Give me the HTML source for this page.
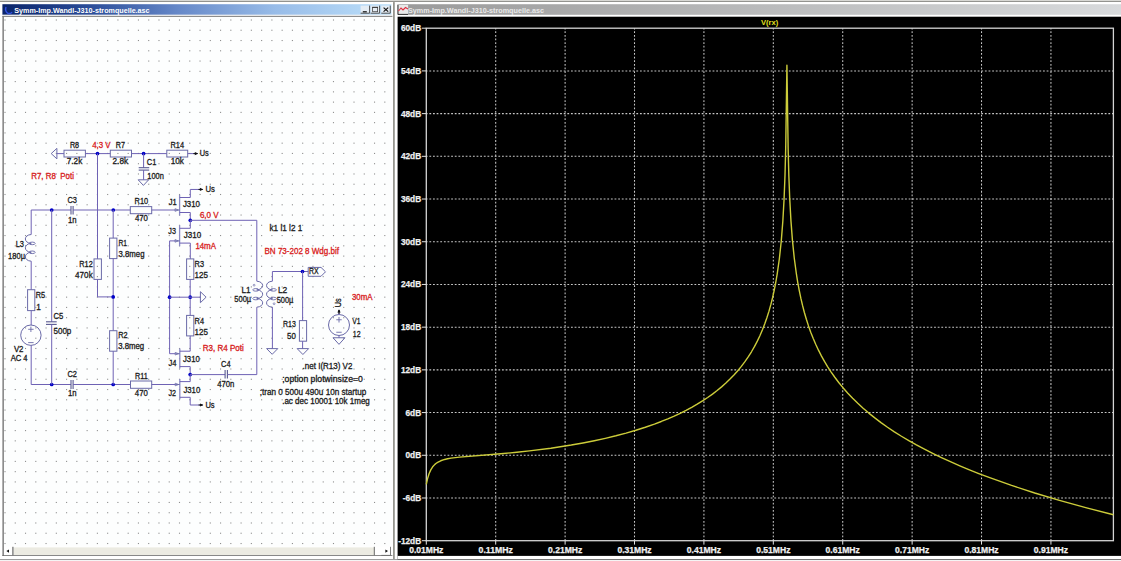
<!DOCTYPE html>
<html><head><meta charset="utf-8"><style>
html,body{margin:0;padding:0;width:1121px;height:561px;overflow:hidden;background:#ffffff;}
svg{position:absolute;left:0;top:0;display:block}
</style></head><body>
<svg width="1121" height="561" viewBox="0 0 1121 561">
<defs>
<linearGradient id="tb1" x1="0" x2="1" y1="0" y2="0"><stop offset="0" stop-color="#0a246a"/><stop offset="0.22" stop-color="#2a4c98"/><stop offset="0.45" stop-color="#6688c8"/><stop offset="0.7" stop-color="#98bce8"/><stop offset="1" stop-color="#bce0fa"/></linearGradient>
<linearGradient id="tb2" x1="0" x2="1" y1="0" y2="0"><stop offset="0" stop-color="#9a9a9a"/><stop offset="1" stop-color="#d8dadc"/></linearGradient>
</defs>

<rect x="0" y="0" width="1121" height="1.2" fill="#d8d8d4"/>
<rect x="0" y="1.2" width="1121" height="0.9" fill="#7a7a76"/>
<rect x="0" y="2.1" width="1121" height="558" fill="#ffffff"/>
<rect x="2.4" y="4.2" width="389" height="10.6" fill="url(#tb1)"/>
<rect x="2.4" y="14.8" width="390" height="1.2" fill="#e8e8e8"/>
<rect x="2.4" y="16.0" width="390" height="0.9" fill="#808080"/>
<rect x="2.4" y="16" width="1.5" height="540" fill="#808080"/>
<rect x="4" y="17" width="388.6" height="529.5" fill="#fdfefe"/>
<g fill="#8e8e8e">
<rect x="4.45" y="19.45" width="1.1" height="1.1"/>
<rect x="4.45" y="29.71" width="1.1" height="1.1"/>
<rect x="4.45" y="39.98" width="1.1" height="1.1"/>
<rect x="4.45" y="50.25" width="1.1" height="1.1"/>
<rect x="4.45" y="60.51" width="1.1" height="1.1"/>
<rect x="4.45" y="70.78" width="1.1" height="1.1"/>
<rect x="4.45" y="81.04" width="1.1" height="1.1"/>
<rect x="4.45" y="91.31" width="1.1" height="1.1"/>
<rect x="4.45" y="101.57" width="1.1" height="1.1"/>
<rect x="4.45" y="111.84" width="1.1" height="1.1"/>
<rect x="4.45" y="122.10" width="1.1" height="1.1"/>
<rect x="4.45" y="132.37" width="1.1" height="1.1"/>
<rect x="4.45" y="142.63" width="1.1" height="1.1"/>
<rect x="4.45" y="152.89" width="1.1" height="1.1"/>
<rect x="4.45" y="163.16" width="1.1" height="1.1"/>
<rect x="4.45" y="173.43" width="1.1" height="1.1"/>
<rect x="4.45" y="183.69" width="1.1" height="1.1"/>
<rect x="4.45" y="193.95" width="1.1" height="1.1"/>
<rect x="4.45" y="204.22" width="1.1" height="1.1"/>
<rect x="4.45" y="214.49" width="1.1" height="1.1"/>
<rect x="4.45" y="224.75" width="1.1" height="1.1"/>
<rect x="4.45" y="235.01" width="1.1" height="1.1"/>
<rect x="4.45" y="245.28" width="1.1" height="1.1"/>
<rect x="4.45" y="255.55" width="1.1" height="1.1"/>
<rect x="4.45" y="265.81" width="1.1" height="1.1"/>
<rect x="4.45" y="276.07" width="1.1" height="1.1"/>
<rect x="4.45" y="286.34" width="1.1" height="1.1"/>
<rect x="4.45" y="296.61" width="1.1" height="1.1"/>
<rect x="4.45" y="306.87" width="1.1" height="1.1"/>
<rect x="4.45" y="317.13" width="1.1" height="1.1"/>
<rect x="4.45" y="327.40" width="1.1" height="1.1"/>
<rect x="4.45" y="337.67" width="1.1" height="1.1"/>
<rect x="4.45" y="347.93" width="1.1" height="1.1"/>
<rect x="4.45" y="358.19" width="1.1" height="1.1"/>
<rect x="4.45" y="368.46" width="1.1" height="1.1"/>
<rect x="4.45" y="378.73" width="1.1" height="1.1"/>
<rect x="4.45" y="388.99" width="1.1" height="1.1"/>
<rect x="4.45" y="399.25" width="1.1" height="1.1"/>
<rect x="4.45" y="409.52" width="1.1" height="1.1"/>
<rect x="4.45" y="419.79" width="1.1" height="1.1"/>
<rect x="4.45" y="430.05" width="1.1" height="1.1"/>
<rect x="4.45" y="440.31" width="1.1" height="1.1"/>
<rect x="4.45" y="450.58" width="1.1" height="1.1"/>
<rect x="4.45" y="460.85" width="1.1" height="1.1"/>
<rect x="4.45" y="471.11" width="1.1" height="1.1"/>
<rect x="4.45" y="481.38" width="1.1" height="1.1"/>
<rect x="4.45" y="491.64" width="1.1" height="1.1"/>
<rect x="4.45" y="501.91" width="1.1" height="1.1"/>
<rect x="4.45" y="512.17" width="1.1" height="1.1"/>
<rect x="4.45" y="522.44" width="1.1" height="1.1"/>
<rect x="4.45" y="532.70" width="1.1" height="1.1"/>
<rect x="4.45" y="542.97" width="1.1" height="1.1"/>
<rect x="14.71" y="19.45" width="1.1" height="1.1"/>
<rect x="14.71" y="29.71" width="1.1" height="1.1"/>
<rect x="14.71" y="39.98" width="1.1" height="1.1"/>
<rect x="14.71" y="50.25" width="1.1" height="1.1"/>
<rect x="14.71" y="60.51" width="1.1" height="1.1"/>
<rect x="14.71" y="70.78" width="1.1" height="1.1"/>
<rect x="14.71" y="81.04" width="1.1" height="1.1"/>
<rect x="14.71" y="91.31" width="1.1" height="1.1"/>
<rect x="14.71" y="101.57" width="1.1" height="1.1"/>
<rect x="14.71" y="111.84" width="1.1" height="1.1"/>
<rect x="14.71" y="122.10" width="1.1" height="1.1"/>
<rect x="14.71" y="132.37" width="1.1" height="1.1"/>
<rect x="14.71" y="142.63" width="1.1" height="1.1"/>
<rect x="14.71" y="152.89" width="1.1" height="1.1"/>
<rect x="14.71" y="163.16" width="1.1" height="1.1"/>
<rect x="14.71" y="173.43" width="1.1" height="1.1"/>
<rect x="14.71" y="183.69" width="1.1" height="1.1"/>
<rect x="14.71" y="193.95" width="1.1" height="1.1"/>
<rect x="14.71" y="204.22" width="1.1" height="1.1"/>
<rect x="14.71" y="214.49" width="1.1" height="1.1"/>
<rect x="14.71" y="224.75" width="1.1" height="1.1"/>
<rect x="14.71" y="235.01" width="1.1" height="1.1"/>
<rect x="14.71" y="245.28" width="1.1" height="1.1"/>
<rect x="14.71" y="255.55" width="1.1" height="1.1"/>
<rect x="14.71" y="265.81" width="1.1" height="1.1"/>
<rect x="14.71" y="276.07" width="1.1" height="1.1"/>
<rect x="14.71" y="286.34" width="1.1" height="1.1"/>
<rect x="14.71" y="296.61" width="1.1" height="1.1"/>
<rect x="14.71" y="306.87" width="1.1" height="1.1"/>
<rect x="14.71" y="317.13" width="1.1" height="1.1"/>
<rect x="14.71" y="327.40" width="1.1" height="1.1"/>
<rect x="14.71" y="337.67" width="1.1" height="1.1"/>
<rect x="14.71" y="347.93" width="1.1" height="1.1"/>
<rect x="14.71" y="358.19" width="1.1" height="1.1"/>
<rect x="14.71" y="368.46" width="1.1" height="1.1"/>
<rect x="14.71" y="378.73" width="1.1" height="1.1"/>
<rect x="14.71" y="388.99" width="1.1" height="1.1"/>
<rect x="14.71" y="399.25" width="1.1" height="1.1"/>
<rect x="14.71" y="409.52" width="1.1" height="1.1"/>
<rect x="14.71" y="419.79" width="1.1" height="1.1"/>
<rect x="14.71" y="430.05" width="1.1" height="1.1"/>
<rect x="14.71" y="440.31" width="1.1" height="1.1"/>
<rect x="14.71" y="450.58" width="1.1" height="1.1"/>
<rect x="14.71" y="460.85" width="1.1" height="1.1"/>
<rect x="14.71" y="471.11" width="1.1" height="1.1"/>
<rect x="14.71" y="481.38" width="1.1" height="1.1"/>
<rect x="14.71" y="491.64" width="1.1" height="1.1"/>
<rect x="14.71" y="501.91" width="1.1" height="1.1"/>
<rect x="14.71" y="512.17" width="1.1" height="1.1"/>
<rect x="14.71" y="522.44" width="1.1" height="1.1"/>
<rect x="14.71" y="532.70" width="1.1" height="1.1"/>
<rect x="14.71" y="542.97" width="1.1" height="1.1"/>
<rect x="24.98" y="19.45" width="1.1" height="1.1"/>
<rect x="24.98" y="29.71" width="1.1" height="1.1"/>
<rect x="24.98" y="39.98" width="1.1" height="1.1"/>
<rect x="24.98" y="50.25" width="1.1" height="1.1"/>
<rect x="24.98" y="60.51" width="1.1" height="1.1"/>
<rect x="24.98" y="70.78" width="1.1" height="1.1"/>
<rect x="24.98" y="81.04" width="1.1" height="1.1"/>
<rect x="24.98" y="91.31" width="1.1" height="1.1"/>
<rect x="24.98" y="101.57" width="1.1" height="1.1"/>
<rect x="24.98" y="111.84" width="1.1" height="1.1"/>
<rect x="24.98" y="122.10" width="1.1" height="1.1"/>
<rect x="24.98" y="132.37" width="1.1" height="1.1"/>
<rect x="24.98" y="142.63" width="1.1" height="1.1"/>
<rect x="24.98" y="152.89" width="1.1" height="1.1"/>
<rect x="24.98" y="163.16" width="1.1" height="1.1"/>
<rect x="24.98" y="173.43" width="1.1" height="1.1"/>
<rect x="24.98" y="183.69" width="1.1" height="1.1"/>
<rect x="24.98" y="193.95" width="1.1" height="1.1"/>
<rect x="24.98" y="204.22" width="1.1" height="1.1"/>
<rect x="24.98" y="214.49" width="1.1" height="1.1"/>
<rect x="24.98" y="224.75" width="1.1" height="1.1"/>
<rect x="24.98" y="235.01" width="1.1" height="1.1"/>
<rect x="24.98" y="245.28" width="1.1" height="1.1"/>
<rect x="24.98" y="255.55" width="1.1" height="1.1"/>
<rect x="24.98" y="265.81" width="1.1" height="1.1"/>
<rect x="24.98" y="276.07" width="1.1" height="1.1"/>
<rect x="24.98" y="286.34" width="1.1" height="1.1"/>
<rect x="24.98" y="296.61" width="1.1" height="1.1"/>
<rect x="24.98" y="306.87" width="1.1" height="1.1"/>
<rect x="24.98" y="317.13" width="1.1" height="1.1"/>
<rect x="24.98" y="327.40" width="1.1" height="1.1"/>
<rect x="24.98" y="337.67" width="1.1" height="1.1"/>
<rect x="24.98" y="347.93" width="1.1" height="1.1"/>
<rect x="24.98" y="358.19" width="1.1" height="1.1"/>
<rect x="24.98" y="368.46" width="1.1" height="1.1"/>
<rect x="24.98" y="378.73" width="1.1" height="1.1"/>
<rect x="24.98" y="388.99" width="1.1" height="1.1"/>
<rect x="24.98" y="399.25" width="1.1" height="1.1"/>
<rect x="24.98" y="409.52" width="1.1" height="1.1"/>
<rect x="24.98" y="419.79" width="1.1" height="1.1"/>
<rect x="24.98" y="430.05" width="1.1" height="1.1"/>
<rect x="24.98" y="440.31" width="1.1" height="1.1"/>
<rect x="24.98" y="450.58" width="1.1" height="1.1"/>
<rect x="24.98" y="460.85" width="1.1" height="1.1"/>
<rect x="24.98" y="471.11" width="1.1" height="1.1"/>
<rect x="24.98" y="481.38" width="1.1" height="1.1"/>
<rect x="24.98" y="491.64" width="1.1" height="1.1"/>
<rect x="24.98" y="501.91" width="1.1" height="1.1"/>
<rect x="24.98" y="512.17" width="1.1" height="1.1"/>
<rect x="24.98" y="522.44" width="1.1" height="1.1"/>
<rect x="24.98" y="532.70" width="1.1" height="1.1"/>
<rect x="24.98" y="542.97" width="1.1" height="1.1"/>
<rect x="35.25" y="19.45" width="1.1" height="1.1"/>
<rect x="35.25" y="29.71" width="1.1" height="1.1"/>
<rect x="35.25" y="39.98" width="1.1" height="1.1"/>
<rect x="35.25" y="50.25" width="1.1" height="1.1"/>
<rect x="35.25" y="60.51" width="1.1" height="1.1"/>
<rect x="35.25" y="70.78" width="1.1" height="1.1"/>
<rect x="35.25" y="81.04" width="1.1" height="1.1"/>
<rect x="35.25" y="91.31" width="1.1" height="1.1"/>
<rect x="35.25" y="101.57" width="1.1" height="1.1"/>
<rect x="35.25" y="111.84" width="1.1" height="1.1"/>
<rect x="35.25" y="122.10" width="1.1" height="1.1"/>
<rect x="35.25" y="132.37" width="1.1" height="1.1"/>
<rect x="35.25" y="142.63" width="1.1" height="1.1"/>
<rect x="35.25" y="152.89" width="1.1" height="1.1"/>
<rect x="35.25" y="163.16" width="1.1" height="1.1"/>
<rect x="35.25" y="173.43" width="1.1" height="1.1"/>
<rect x="35.25" y="183.69" width="1.1" height="1.1"/>
<rect x="35.25" y="193.95" width="1.1" height="1.1"/>
<rect x="35.25" y="204.22" width="1.1" height="1.1"/>
<rect x="35.25" y="214.49" width="1.1" height="1.1"/>
<rect x="35.25" y="224.75" width="1.1" height="1.1"/>
<rect x="35.25" y="235.01" width="1.1" height="1.1"/>
<rect x="35.25" y="245.28" width="1.1" height="1.1"/>
<rect x="35.25" y="255.55" width="1.1" height="1.1"/>
<rect x="35.25" y="265.81" width="1.1" height="1.1"/>
<rect x="35.25" y="276.07" width="1.1" height="1.1"/>
<rect x="35.25" y="286.34" width="1.1" height="1.1"/>
<rect x="35.25" y="296.61" width="1.1" height="1.1"/>
<rect x="35.25" y="306.87" width="1.1" height="1.1"/>
<rect x="35.25" y="317.13" width="1.1" height="1.1"/>
<rect x="35.25" y="327.40" width="1.1" height="1.1"/>
<rect x="35.25" y="337.67" width="1.1" height="1.1"/>
<rect x="35.25" y="347.93" width="1.1" height="1.1"/>
<rect x="35.25" y="358.19" width="1.1" height="1.1"/>
<rect x="35.25" y="368.46" width="1.1" height="1.1"/>
<rect x="35.25" y="378.73" width="1.1" height="1.1"/>
<rect x="35.25" y="388.99" width="1.1" height="1.1"/>
<rect x="35.25" y="399.25" width="1.1" height="1.1"/>
<rect x="35.25" y="409.52" width="1.1" height="1.1"/>
<rect x="35.25" y="419.79" width="1.1" height="1.1"/>
<rect x="35.25" y="430.05" width="1.1" height="1.1"/>
<rect x="35.25" y="440.31" width="1.1" height="1.1"/>
<rect x="35.25" y="450.58" width="1.1" height="1.1"/>
<rect x="35.25" y="460.85" width="1.1" height="1.1"/>
<rect x="35.25" y="471.11" width="1.1" height="1.1"/>
<rect x="35.25" y="481.38" width="1.1" height="1.1"/>
<rect x="35.25" y="491.64" width="1.1" height="1.1"/>
<rect x="35.25" y="501.91" width="1.1" height="1.1"/>
<rect x="35.25" y="512.17" width="1.1" height="1.1"/>
<rect x="35.25" y="522.44" width="1.1" height="1.1"/>
<rect x="35.25" y="532.70" width="1.1" height="1.1"/>
<rect x="35.25" y="542.97" width="1.1" height="1.1"/>
<rect x="45.51" y="19.45" width="1.1" height="1.1"/>
<rect x="45.51" y="29.71" width="1.1" height="1.1"/>
<rect x="45.51" y="39.98" width="1.1" height="1.1"/>
<rect x="45.51" y="50.25" width="1.1" height="1.1"/>
<rect x="45.51" y="60.51" width="1.1" height="1.1"/>
<rect x="45.51" y="70.78" width="1.1" height="1.1"/>
<rect x="45.51" y="81.04" width="1.1" height="1.1"/>
<rect x="45.51" y="91.31" width="1.1" height="1.1"/>
<rect x="45.51" y="101.57" width="1.1" height="1.1"/>
<rect x="45.51" y="111.84" width="1.1" height="1.1"/>
<rect x="45.51" y="122.10" width="1.1" height="1.1"/>
<rect x="45.51" y="132.37" width="1.1" height="1.1"/>
<rect x="45.51" y="142.63" width="1.1" height="1.1"/>
<rect x="45.51" y="152.89" width="1.1" height="1.1"/>
<rect x="45.51" y="163.16" width="1.1" height="1.1"/>
<rect x="45.51" y="173.43" width="1.1" height="1.1"/>
<rect x="45.51" y="183.69" width="1.1" height="1.1"/>
<rect x="45.51" y="193.95" width="1.1" height="1.1"/>
<rect x="45.51" y="204.22" width="1.1" height="1.1"/>
<rect x="45.51" y="214.49" width="1.1" height="1.1"/>
<rect x="45.51" y="224.75" width="1.1" height="1.1"/>
<rect x="45.51" y="235.01" width="1.1" height="1.1"/>
<rect x="45.51" y="245.28" width="1.1" height="1.1"/>
<rect x="45.51" y="255.55" width="1.1" height="1.1"/>
<rect x="45.51" y="265.81" width="1.1" height="1.1"/>
<rect x="45.51" y="276.07" width="1.1" height="1.1"/>
<rect x="45.51" y="286.34" width="1.1" height="1.1"/>
<rect x="45.51" y="296.61" width="1.1" height="1.1"/>
<rect x="45.51" y="306.87" width="1.1" height="1.1"/>
<rect x="45.51" y="317.13" width="1.1" height="1.1"/>
<rect x="45.51" y="327.40" width="1.1" height="1.1"/>
<rect x="45.51" y="337.67" width="1.1" height="1.1"/>
<rect x="45.51" y="347.93" width="1.1" height="1.1"/>
<rect x="45.51" y="358.19" width="1.1" height="1.1"/>
<rect x="45.51" y="368.46" width="1.1" height="1.1"/>
<rect x="45.51" y="378.73" width="1.1" height="1.1"/>
<rect x="45.51" y="388.99" width="1.1" height="1.1"/>
<rect x="45.51" y="399.25" width="1.1" height="1.1"/>
<rect x="45.51" y="409.52" width="1.1" height="1.1"/>
<rect x="45.51" y="419.79" width="1.1" height="1.1"/>
<rect x="45.51" y="430.05" width="1.1" height="1.1"/>
<rect x="45.51" y="440.31" width="1.1" height="1.1"/>
<rect x="45.51" y="450.58" width="1.1" height="1.1"/>
<rect x="45.51" y="460.85" width="1.1" height="1.1"/>
<rect x="45.51" y="471.11" width="1.1" height="1.1"/>
<rect x="45.51" y="481.38" width="1.1" height="1.1"/>
<rect x="45.51" y="491.64" width="1.1" height="1.1"/>
<rect x="45.51" y="501.91" width="1.1" height="1.1"/>
<rect x="45.51" y="512.17" width="1.1" height="1.1"/>
<rect x="45.51" y="522.44" width="1.1" height="1.1"/>
<rect x="45.51" y="532.70" width="1.1" height="1.1"/>
<rect x="45.51" y="542.97" width="1.1" height="1.1"/>
<rect x="55.78" y="19.45" width="1.1" height="1.1"/>
<rect x="55.78" y="29.71" width="1.1" height="1.1"/>
<rect x="55.78" y="39.98" width="1.1" height="1.1"/>
<rect x="55.78" y="50.25" width="1.1" height="1.1"/>
<rect x="55.78" y="60.51" width="1.1" height="1.1"/>
<rect x="55.78" y="70.78" width="1.1" height="1.1"/>
<rect x="55.78" y="81.04" width="1.1" height="1.1"/>
<rect x="55.78" y="91.31" width="1.1" height="1.1"/>
<rect x="55.78" y="101.57" width="1.1" height="1.1"/>
<rect x="55.78" y="111.84" width="1.1" height="1.1"/>
<rect x="55.78" y="122.10" width="1.1" height="1.1"/>
<rect x="55.78" y="132.37" width="1.1" height="1.1"/>
<rect x="55.78" y="142.63" width="1.1" height="1.1"/>
<rect x="55.78" y="152.89" width="1.1" height="1.1"/>
<rect x="55.78" y="163.16" width="1.1" height="1.1"/>
<rect x="55.78" y="173.43" width="1.1" height="1.1"/>
<rect x="55.78" y="183.69" width="1.1" height="1.1"/>
<rect x="55.78" y="193.95" width="1.1" height="1.1"/>
<rect x="55.78" y="204.22" width="1.1" height="1.1"/>
<rect x="55.78" y="214.49" width="1.1" height="1.1"/>
<rect x="55.78" y="224.75" width="1.1" height="1.1"/>
<rect x="55.78" y="235.01" width="1.1" height="1.1"/>
<rect x="55.78" y="245.28" width="1.1" height="1.1"/>
<rect x="55.78" y="255.55" width="1.1" height="1.1"/>
<rect x="55.78" y="265.81" width="1.1" height="1.1"/>
<rect x="55.78" y="276.07" width="1.1" height="1.1"/>
<rect x="55.78" y="286.34" width="1.1" height="1.1"/>
<rect x="55.78" y="296.61" width="1.1" height="1.1"/>
<rect x="55.78" y="306.87" width="1.1" height="1.1"/>
<rect x="55.78" y="317.13" width="1.1" height="1.1"/>
<rect x="55.78" y="327.40" width="1.1" height="1.1"/>
<rect x="55.78" y="337.67" width="1.1" height="1.1"/>
<rect x="55.78" y="347.93" width="1.1" height="1.1"/>
<rect x="55.78" y="358.19" width="1.1" height="1.1"/>
<rect x="55.78" y="368.46" width="1.1" height="1.1"/>
<rect x="55.78" y="378.73" width="1.1" height="1.1"/>
<rect x="55.78" y="388.99" width="1.1" height="1.1"/>
<rect x="55.78" y="399.25" width="1.1" height="1.1"/>
<rect x="55.78" y="409.52" width="1.1" height="1.1"/>
<rect x="55.78" y="419.79" width="1.1" height="1.1"/>
<rect x="55.78" y="430.05" width="1.1" height="1.1"/>
<rect x="55.78" y="440.31" width="1.1" height="1.1"/>
<rect x="55.78" y="450.58" width="1.1" height="1.1"/>
<rect x="55.78" y="460.85" width="1.1" height="1.1"/>
<rect x="55.78" y="471.11" width="1.1" height="1.1"/>
<rect x="55.78" y="481.38" width="1.1" height="1.1"/>
<rect x="55.78" y="491.64" width="1.1" height="1.1"/>
<rect x="55.78" y="501.91" width="1.1" height="1.1"/>
<rect x="55.78" y="512.17" width="1.1" height="1.1"/>
<rect x="55.78" y="522.44" width="1.1" height="1.1"/>
<rect x="55.78" y="532.70" width="1.1" height="1.1"/>
<rect x="55.78" y="542.97" width="1.1" height="1.1"/>
<rect x="66.04" y="19.45" width="1.1" height="1.1"/>
<rect x="66.04" y="29.71" width="1.1" height="1.1"/>
<rect x="66.04" y="39.98" width="1.1" height="1.1"/>
<rect x="66.04" y="50.25" width="1.1" height="1.1"/>
<rect x="66.04" y="60.51" width="1.1" height="1.1"/>
<rect x="66.04" y="70.78" width="1.1" height="1.1"/>
<rect x="66.04" y="81.04" width="1.1" height="1.1"/>
<rect x="66.04" y="91.31" width="1.1" height="1.1"/>
<rect x="66.04" y="101.57" width="1.1" height="1.1"/>
<rect x="66.04" y="111.84" width="1.1" height="1.1"/>
<rect x="66.04" y="122.10" width="1.1" height="1.1"/>
<rect x="66.04" y="132.37" width="1.1" height="1.1"/>
<rect x="66.04" y="142.63" width="1.1" height="1.1"/>
<rect x="66.04" y="152.89" width="1.1" height="1.1"/>
<rect x="66.04" y="163.16" width="1.1" height="1.1"/>
<rect x="66.04" y="173.43" width="1.1" height="1.1"/>
<rect x="66.04" y="183.69" width="1.1" height="1.1"/>
<rect x="66.04" y="193.95" width="1.1" height="1.1"/>
<rect x="66.04" y="204.22" width="1.1" height="1.1"/>
<rect x="66.04" y="214.49" width="1.1" height="1.1"/>
<rect x="66.04" y="224.75" width="1.1" height="1.1"/>
<rect x="66.04" y="235.01" width="1.1" height="1.1"/>
<rect x="66.04" y="245.28" width="1.1" height="1.1"/>
<rect x="66.04" y="255.55" width="1.1" height="1.1"/>
<rect x="66.04" y="265.81" width="1.1" height="1.1"/>
<rect x="66.04" y="276.07" width="1.1" height="1.1"/>
<rect x="66.04" y="286.34" width="1.1" height="1.1"/>
<rect x="66.04" y="296.61" width="1.1" height="1.1"/>
<rect x="66.04" y="306.87" width="1.1" height="1.1"/>
<rect x="66.04" y="317.13" width="1.1" height="1.1"/>
<rect x="66.04" y="327.40" width="1.1" height="1.1"/>
<rect x="66.04" y="337.67" width="1.1" height="1.1"/>
<rect x="66.04" y="347.93" width="1.1" height="1.1"/>
<rect x="66.04" y="358.19" width="1.1" height="1.1"/>
<rect x="66.04" y="368.46" width="1.1" height="1.1"/>
<rect x="66.04" y="378.73" width="1.1" height="1.1"/>
<rect x="66.04" y="388.99" width="1.1" height="1.1"/>
<rect x="66.04" y="399.25" width="1.1" height="1.1"/>
<rect x="66.04" y="409.52" width="1.1" height="1.1"/>
<rect x="66.04" y="419.79" width="1.1" height="1.1"/>
<rect x="66.04" y="430.05" width="1.1" height="1.1"/>
<rect x="66.04" y="440.31" width="1.1" height="1.1"/>
<rect x="66.04" y="450.58" width="1.1" height="1.1"/>
<rect x="66.04" y="460.85" width="1.1" height="1.1"/>
<rect x="66.04" y="471.11" width="1.1" height="1.1"/>
<rect x="66.04" y="481.38" width="1.1" height="1.1"/>
<rect x="66.04" y="491.64" width="1.1" height="1.1"/>
<rect x="66.04" y="501.91" width="1.1" height="1.1"/>
<rect x="66.04" y="512.17" width="1.1" height="1.1"/>
<rect x="66.04" y="522.44" width="1.1" height="1.1"/>
<rect x="66.04" y="532.70" width="1.1" height="1.1"/>
<rect x="66.04" y="542.97" width="1.1" height="1.1"/>
<rect x="76.31" y="19.45" width="1.1" height="1.1"/>
<rect x="76.31" y="29.71" width="1.1" height="1.1"/>
<rect x="76.31" y="39.98" width="1.1" height="1.1"/>
<rect x="76.31" y="50.25" width="1.1" height="1.1"/>
<rect x="76.31" y="60.51" width="1.1" height="1.1"/>
<rect x="76.31" y="70.78" width="1.1" height="1.1"/>
<rect x="76.31" y="81.04" width="1.1" height="1.1"/>
<rect x="76.31" y="91.31" width="1.1" height="1.1"/>
<rect x="76.31" y="101.57" width="1.1" height="1.1"/>
<rect x="76.31" y="111.84" width="1.1" height="1.1"/>
<rect x="76.31" y="122.10" width="1.1" height="1.1"/>
<rect x="76.31" y="132.37" width="1.1" height="1.1"/>
<rect x="76.31" y="142.63" width="1.1" height="1.1"/>
<rect x="76.31" y="152.89" width="1.1" height="1.1"/>
<rect x="76.31" y="163.16" width="1.1" height="1.1"/>
<rect x="76.31" y="173.43" width="1.1" height="1.1"/>
<rect x="76.31" y="183.69" width="1.1" height="1.1"/>
<rect x="76.31" y="193.95" width="1.1" height="1.1"/>
<rect x="76.31" y="204.22" width="1.1" height="1.1"/>
<rect x="76.31" y="214.49" width="1.1" height="1.1"/>
<rect x="76.31" y="224.75" width="1.1" height="1.1"/>
<rect x="76.31" y="235.01" width="1.1" height="1.1"/>
<rect x="76.31" y="245.28" width="1.1" height="1.1"/>
<rect x="76.31" y="255.55" width="1.1" height="1.1"/>
<rect x="76.31" y="265.81" width="1.1" height="1.1"/>
<rect x="76.31" y="276.07" width="1.1" height="1.1"/>
<rect x="76.31" y="286.34" width="1.1" height="1.1"/>
<rect x="76.31" y="296.61" width="1.1" height="1.1"/>
<rect x="76.31" y="306.87" width="1.1" height="1.1"/>
<rect x="76.31" y="317.13" width="1.1" height="1.1"/>
<rect x="76.31" y="327.40" width="1.1" height="1.1"/>
<rect x="76.31" y="337.67" width="1.1" height="1.1"/>
<rect x="76.31" y="347.93" width="1.1" height="1.1"/>
<rect x="76.31" y="358.19" width="1.1" height="1.1"/>
<rect x="76.31" y="368.46" width="1.1" height="1.1"/>
<rect x="76.31" y="378.73" width="1.1" height="1.1"/>
<rect x="76.31" y="388.99" width="1.1" height="1.1"/>
<rect x="76.31" y="399.25" width="1.1" height="1.1"/>
<rect x="76.31" y="409.52" width="1.1" height="1.1"/>
<rect x="76.31" y="419.79" width="1.1" height="1.1"/>
<rect x="76.31" y="430.05" width="1.1" height="1.1"/>
<rect x="76.31" y="440.31" width="1.1" height="1.1"/>
<rect x="76.31" y="450.58" width="1.1" height="1.1"/>
<rect x="76.31" y="460.85" width="1.1" height="1.1"/>
<rect x="76.31" y="471.11" width="1.1" height="1.1"/>
<rect x="76.31" y="481.38" width="1.1" height="1.1"/>
<rect x="76.31" y="491.64" width="1.1" height="1.1"/>
<rect x="76.31" y="501.91" width="1.1" height="1.1"/>
<rect x="76.31" y="512.17" width="1.1" height="1.1"/>
<rect x="76.31" y="522.44" width="1.1" height="1.1"/>
<rect x="76.31" y="532.70" width="1.1" height="1.1"/>
<rect x="76.31" y="542.97" width="1.1" height="1.1"/>
<rect x="86.57" y="19.45" width="1.1" height="1.1"/>
<rect x="86.57" y="29.71" width="1.1" height="1.1"/>
<rect x="86.57" y="39.98" width="1.1" height="1.1"/>
<rect x="86.57" y="50.25" width="1.1" height="1.1"/>
<rect x="86.57" y="60.51" width="1.1" height="1.1"/>
<rect x="86.57" y="70.78" width="1.1" height="1.1"/>
<rect x="86.57" y="81.04" width="1.1" height="1.1"/>
<rect x="86.57" y="91.31" width="1.1" height="1.1"/>
<rect x="86.57" y="101.57" width="1.1" height="1.1"/>
<rect x="86.57" y="111.84" width="1.1" height="1.1"/>
<rect x="86.57" y="122.10" width="1.1" height="1.1"/>
<rect x="86.57" y="132.37" width="1.1" height="1.1"/>
<rect x="86.57" y="142.63" width="1.1" height="1.1"/>
<rect x="86.57" y="152.89" width="1.1" height="1.1"/>
<rect x="86.57" y="163.16" width="1.1" height="1.1"/>
<rect x="86.57" y="173.43" width="1.1" height="1.1"/>
<rect x="86.57" y="183.69" width="1.1" height="1.1"/>
<rect x="86.57" y="193.95" width="1.1" height="1.1"/>
<rect x="86.57" y="204.22" width="1.1" height="1.1"/>
<rect x="86.57" y="214.49" width="1.1" height="1.1"/>
<rect x="86.57" y="224.75" width="1.1" height="1.1"/>
<rect x="86.57" y="235.01" width="1.1" height="1.1"/>
<rect x="86.57" y="245.28" width="1.1" height="1.1"/>
<rect x="86.57" y="255.55" width="1.1" height="1.1"/>
<rect x="86.57" y="265.81" width="1.1" height="1.1"/>
<rect x="86.57" y="276.07" width="1.1" height="1.1"/>
<rect x="86.57" y="286.34" width="1.1" height="1.1"/>
<rect x="86.57" y="296.61" width="1.1" height="1.1"/>
<rect x="86.57" y="306.87" width="1.1" height="1.1"/>
<rect x="86.57" y="317.13" width="1.1" height="1.1"/>
<rect x="86.57" y="327.40" width="1.1" height="1.1"/>
<rect x="86.57" y="337.67" width="1.1" height="1.1"/>
<rect x="86.57" y="347.93" width="1.1" height="1.1"/>
<rect x="86.57" y="358.19" width="1.1" height="1.1"/>
<rect x="86.57" y="368.46" width="1.1" height="1.1"/>
<rect x="86.57" y="378.73" width="1.1" height="1.1"/>
<rect x="86.57" y="388.99" width="1.1" height="1.1"/>
<rect x="86.57" y="399.25" width="1.1" height="1.1"/>
<rect x="86.57" y="409.52" width="1.1" height="1.1"/>
<rect x="86.57" y="419.79" width="1.1" height="1.1"/>
<rect x="86.57" y="430.05" width="1.1" height="1.1"/>
<rect x="86.57" y="440.31" width="1.1" height="1.1"/>
<rect x="86.57" y="450.58" width="1.1" height="1.1"/>
<rect x="86.57" y="460.85" width="1.1" height="1.1"/>
<rect x="86.57" y="471.11" width="1.1" height="1.1"/>
<rect x="86.57" y="481.38" width="1.1" height="1.1"/>
<rect x="86.57" y="491.64" width="1.1" height="1.1"/>
<rect x="86.57" y="501.91" width="1.1" height="1.1"/>
<rect x="86.57" y="512.17" width="1.1" height="1.1"/>
<rect x="86.57" y="522.44" width="1.1" height="1.1"/>
<rect x="86.57" y="532.70" width="1.1" height="1.1"/>
<rect x="86.57" y="542.97" width="1.1" height="1.1"/>
<rect x="96.84" y="19.45" width="1.1" height="1.1"/>
<rect x="96.84" y="29.71" width="1.1" height="1.1"/>
<rect x="96.84" y="39.98" width="1.1" height="1.1"/>
<rect x="96.84" y="50.25" width="1.1" height="1.1"/>
<rect x="96.84" y="60.51" width="1.1" height="1.1"/>
<rect x="96.84" y="70.78" width="1.1" height="1.1"/>
<rect x="96.84" y="81.04" width="1.1" height="1.1"/>
<rect x="96.84" y="91.31" width="1.1" height="1.1"/>
<rect x="96.84" y="101.57" width="1.1" height="1.1"/>
<rect x="96.84" y="111.84" width="1.1" height="1.1"/>
<rect x="96.84" y="122.10" width="1.1" height="1.1"/>
<rect x="96.84" y="132.37" width="1.1" height="1.1"/>
<rect x="96.84" y="142.63" width="1.1" height="1.1"/>
<rect x="96.84" y="152.89" width="1.1" height="1.1"/>
<rect x="96.84" y="163.16" width="1.1" height="1.1"/>
<rect x="96.84" y="173.43" width="1.1" height="1.1"/>
<rect x="96.84" y="183.69" width="1.1" height="1.1"/>
<rect x="96.84" y="193.95" width="1.1" height="1.1"/>
<rect x="96.84" y="204.22" width="1.1" height="1.1"/>
<rect x="96.84" y="214.49" width="1.1" height="1.1"/>
<rect x="96.84" y="224.75" width="1.1" height="1.1"/>
<rect x="96.84" y="235.01" width="1.1" height="1.1"/>
<rect x="96.84" y="245.28" width="1.1" height="1.1"/>
<rect x="96.84" y="255.55" width="1.1" height="1.1"/>
<rect x="96.84" y="265.81" width="1.1" height="1.1"/>
<rect x="96.84" y="276.07" width="1.1" height="1.1"/>
<rect x="96.84" y="286.34" width="1.1" height="1.1"/>
<rect x="96.84" y="296.61" width="1.1" height="1.1"/>
<rect x="96.84" y="306.87" width="1.1" height="1.1"/>
<rect x="96.84" y="317.13" width="1.1" height="1.1"/>
<rect x="96.84" y="327.40" width="1.1" height="1.1"/>
<rect x="96.84" y="337.67" width="1.1" height="1.1"/>
<rect x="96.84" y="347.93" width="1.1" height="1.1"/>
<rect x="96.84" y="358.19" width="1.1" height="1.1"/>
<rect x="96.84" y="368.46" width="1.1" height="1.1"/>
<rect x="96.84" y="378.73" width="1.1" height="1.1"/>
<rect x="96.84" y="388.99" width="1.1" height="1.1"/>
<rect x="96.84" y="399.25" width="1.1" height="1.1"/>
<rect x="96.84" y="409.52" width="1.1" height="1.1"/>
<rect x="96.84" y="419.79" width="1.1" height="1.1"/>
<rect x="96.84" y="430.05" width="1.1" height="1.1"/>
<rect x="96.84" y="440.31" width="1.1" height="1.1"/>
<rect x="96.84" y="450.58" width="1.1" height="1.1"/>
<rect x="96.84" y="460.85" width="1.1" height="1.1"/>
<rect x="96.84" y="471.11" width="1.1" height="1.1"/>
<rect x="96.84" y="481.38" width="1.1" height="1.1"/>
<rect x="96.84" y="491.64" width="1.1" height="1.1"/>
<rect x="96.84" y="501.91" width="1.1" height="1.1"/>
<rect x="96.84" y="512.17" width="1.1" height="1.1"/>
<rect x="96.84" y="522.44" width="1.1" height="1.1"/>
<rect x="96.84" y="532.70" width="1.1" height="1.1"/>
<rect x="96.84" y="542.97" width="1.1" height="1.1"/>
<rect x="107.10" y="19.45" width="1.1" height="1.1"/>
<rect x="107.10" y="29.71" width="1.1" height="1.1"/>
<rect x="107.10" y="39.98" width="1.1" height="1.1"/>
<rect x="107.10" y="50.25" width="1.1" height="1.1"/>
<rect x="107.10" y="60.51" width="1.1" height="1.1"/>
<rect x="107.10" y="70.78" width="1.1" height="1.1"/>
<rect x="107.10" y="81.04" width="1.1" height="1.1"/>
<rect x="107.10" y="91.31" width="1.1" height="1.1"/>
<rect x="107.10" y="101.57" width="1.1" height="1.1"/>
<rect x="107.10" y="111.84" width="1.1" height="1.1"/>
<rect x="107.10" y="122.10" width="1.1" height="1.1"/>
<rect x="107.10" y="132.37" width="1.1" height="1.1"/>
<rect x="107.10" y="142.63" width="1.1" height="1.1"/>
<rect x="107.10" y="152.89" width="1.1" height="1.1"/>
<rect x="107.10" y="163.16" width="1.1" height="1.1"/>
<rect x="107.10" y="173.43" width="1.1" height="1.1"/>
<rect x="107.10" y="183.69" width="1.1" height="1.1"/>
<rect x="107.10" y="193.95" width="1.1" height="1.1"/>
<rect x="107.10" y="204.22" width="1.1" height="1.1"/>
<rect x="107.10" y="214.49" width="1.1" height="1.1"/>
<rect x="107.10" y="224.75" width="1.1" height="1.1"/>
<rect x="107.10" y="235.01" width="1.1" height="1.1"/>
<rect x="107.10" y="245.28" width="1.1" height="1.1"/>
<rect x="107.10" y="255.55" width="1.1" height="1.1"/>
<rect x="107.10" y="265.81" width="1.1" height="1.1"/>
<rect x="107.10" y="276.07" width="1.1" height="1.1"/>
<rect x="107.10" y="286.34" width="1.1" height="1.1"/>
<rect x="107.10" y="296.61" width="1.1" height="1.1"/>
<rect x="107.10" y="306.87" width="1.1" height="1.1"/>
<rect x="107.10" y="317.13" width="1.1" height="1.1"/>
<rect x="107.10" y="327.40" width="1.1" height="1.1"/>
<rect x="107.10" y="337.67" width="1.1" height="1.1"/>
<rect x="107.10" y="347.93" width="1.1" height="1.1"/>
<rect x="107.10" y="358.19" width="1.1" height="1.1"/>
<rect x="107.10" y="368.46" width="1.1" height="1.1"/>
<rect x="107.10" y="378.73" width="1.1" height="1.1"/>
<rect x="107.10" y="388.99" width="1.1" height="1.1"/>
<rect x="107.10" y="399.25" width="1.1" height="1.1"/>
<rect x="107.10" y="409.52" width="1.1" height="1.1"/>
<rect x="107.10" y="419.79" width="1.1" height="1.1"/>
<rect x="107.10" y="430.05" width="1.1" height="1.1"/>
<rect x="107.10" y="440.31" width="1.1" height="1.1"/>
<rect x="107.10" y="450.58" width="1.1" height="1.1"/>
<rect x="107.10" y="460.85" width="1.1" height="1.1"/>
<rect x="107.10" y="471.11" width="1.1" height="1.1"/>
<rect x="107.10" y="481.38" width="1.1" height="1.1"/>
<rect x="107.10" y="491.64" width="1.1" height="1.1"/>
<rect x="107.10" y="501.91" width="1.1" height="1.1"/>
<rect x="107.10" y="512.17" width="1.1" height="1.1"/>
<rect x="107.10" y="522.44" width="1.1" height="1.1"/>
<rect x="107.10" y="532.70" width="1.1" height="1.1"/>
<rect x="107.10" y="542.97" width="1.1" height="1.1"/>
<rect x="117.37" y="19.45" width="1.1" height="1.1"/>
<rect x="117.37" y="29.71" width="1.1" height="1.1"/>
<rect x="117.37" y="39.98" width="1.1" height="1.1"/>
<rect x="117.37" y="50.25" width="1.1" height="1.1"/>
<rect x="117.37" y="60.51" width="1.1" height="1.1"/>
<rect x="117.37" y="70.78" width="1.1" height="1.1"/>
<rect x="117.37" y="81.04" width="1.1" height="1.1"/>
<rect x="117.37" y="91.31" width="1.1" height="1.1"/>
<rect x="117.37" y="101.57" width="1.1" height="1.1"/>
<rect x="117.37" y="111.84" width="1.1" height="1.1"/>
<rect x="117.37" y="122.10" width="1.1" height="1.1"/>
<rect x="117.37" y="132.37" width="1.1" height="1.1"/>
<rect x="117.37" y="142.63" width="1.1" height="1.1"/>
<rect x="117.37" y="152.89" width="1.1" height="1.1"/>
<rect x="117.37" y="163.16" width="1.1" height="1.1"/>
<rect x="117.37" y="173.43" width="1.1" height="1.1"/>
<rect x="117.37" y="183.69" width="1.1" height="1.1"/>
<rect x="117.37" y="193.95" width="1.1" height="1.1"/>
<rect x="117.37" y="204.22" width="1.1" height="1.1"/>
<rect x="117.37" y="214.49" width="1.1" height="1.1"/>
<rect x="117.37" y="224.75" width="1.1" height="1.1"/>
<rect x="117.37" y="235.01" width="1.1" height="1.1"/>
<rect x="117.37" y="245.28" width="1.1" height="1.1"/>
<rect x="117.37" y="255.55" width="1.1" height="1.1"/>
<rect x="117.37" y="265.81" width="1.1" height="1.1"/>
<rect x="117.37" y="276.07" width="1.1" height="1.1"/>
<rect x="117.37" y="286.34" width="1.1" height="1.1"/>
<rect x="117.37" y="296.61" width="1.1" height="1.1"/>
<rect x="117.37" y="306.87" width="1.1" height="1.1"/>
<rect x="117.37" y="317.13" width="1.1" height="1.1"/>
<rect x="117.37" y="327.40" width="1.1" height="1.1"/>
<rect x="117.37" y="337.67" width="1.1" height="1.1"/>
<rect x="117.37" y="347.93" width="1.1" height="1.1"/>
<rect x="117.37" y="358.19" width="1.1" height="1.1"/>
<rect x="117.37" y="368.46" width="1.1" height="1.1"/>
<rect x="117.37" y="378.73" width="1.1" height="1.1"/>
<rect x="117.37" y="388.99" width="1.1" height="1.1"/>
<rect x="117.37" y="399.25" width="1.1" height="1.1"/>
<rect x="117.37" y="409.52" width="1.1" height="1.1"/>
<rect x="117.37" y="419.79" width="1.1" height="1.1"/>
<rect x="117.37" y="430.05" width="1.1" height="1.1"/>
<rect x="117.37" y="440.31" width="1.1" height="1.1"/>
<rect x="117.37" y="450.58" width="1.1" height="1.1"/>
<rect x="117.37" y="460.85" width="1.1" height="1.1"/>
<rect x="117.37" y="471.11" width="1.1" height="1.1"/>
<rect x="117.37" y="481.38" width="1.1" height="1.1"/>
<rect x="117.37" y="491.64" width="1.1" height="1.1"/>
<rect x="117.37" y="501.91" width="1.1" height="1.1"/>
<rect x="117.37" y="512.17" width="1.1" height="1.1"/>
<rect x="117.37" y="522.44" width="1.1" height="1.1"/>
<rect x="117.37" y="532.70" width="1.1" height="1.1"/>
<rect x="117.37" y="542.97" width="1.1" height="1.1"/>
<rect x="127.63" y="19.45" width="1.1" height="1.1"/>
<rect x="127.63" y="29.71" width="1.1" height="1.1"/>
<rect x="127.63" y="39.98" width="1.1" height="1.1"/>
<rect x="127.63" y="50.25" width="1.1" height="1.1"/>
<rect x="127.63" y="60.51" width="1.1" height="1.1"/>
<rect x="127.63" y="70.78" width="1.1" height="1.1"/>
<rect x="127.63" y="81.04" width="1.1" height="1.1"/>
<rect x="127.63" y="91.31" width="1.1" height="1.1"/>
<rect x="127.63" y="101.57" width="1.1" height="1.1"/>
<rect x="127.63" y="111.84" width="1.1" height="1.1"/>
<rect x="127.63" y="122.10" width="1.1" height="1.1"/>
<rect x="127.63" y="132.37" width="1.1" height="1.1"/>
<rect x="127.63" y="142.63" width="1.1" height="1.1"/>
<rect x="127.63" y="152.89" width="1.1" height="1.1"/>
<rect x="127.63" y="163.16" width="1.1" height="1.1"/>
<rect x="127.63" y="173.43" width="1.1" height="1.1"/>
<rect x="127.63" y="183.69" width="1.1" height="1.1"/>
<rect x="127.63" y="193.95" width="1.1" height="1.1"/>
<rect x="127.63" y="204.22" width="1.1" height="1.1"/>
<rect x="127.63" y="214.49" width="1.1" height="1.1"/>
<rect x="127.63" y="224.75" width="1.1" height="1.1"/>
<rect x="127.63" y="235.01" width="1.1" height="1.1"/>
<rect x="127.63" y="245.28" width="1.1" height="1.1"/>
<rect x="127.63" y="255.55" width="1.1" height="1.1"/>
<rect x="127.63" y="265.81" width="1.1" height="1.1"/>
<rect x="127.63" y="276.07" width="1.1" height="1.1"/>
<rect x="127.63" y="286.34" width="1.1" height="1.1"/>
<rect x="127.63" y="296.61" width="1.1" height="1.1"/>
<rect x="127.63" y="306.87" width="1.1" height="1.1"/>
<rect x="127.63" y="317.13" width="1.1" height="1.1"/>
<rect x="127.63" y="327.40" width="1.1" height="1.1"/>
<rect x="127.63" y="337.67" width="1.1" height="1.1"/>
<rect x="127.63" y="347.93" width="1.1" height="1.1"/>
<rect x="127.63" y="358.19" width="1.1" height="1.1"/>
<rect x="127.63" y="368.46" width="1.1" height="1.1"/>
<rect x="127.63" y="378.73" width="1.1" height="1.1"/>
<rect x="127.63" y="388.99" width="1.1" height="1.1"/>
<rect x="127.63" y="399.25" width="1.1" height="1.1"/>
<rect x="127.63" y="409.52" width="1.1" height="1.1"/>
<rect x="127.63" y="419.79" width="1.1" height="1.1"/>
<rect x="127.63" y="430.05" width="1.1" height="1.1"/>
<rect x="127.63" y="440.31" width="1.1" height="1.1"/>
<rect x="127.63" y="450.58" width="1.1" height="1.1"/>
<rect x="127.63" y="460.85" width="1.1" height="1.1"/>
<rect x="127.63" y="471.11" width="1.1" height="1.1"/>
<rect x="127.63" y="481.38" width="1.1" height="1.1"/>
<rect x="127.63" y="491.64" width="1.1" height="1.1"/>
<rect x="127.63" y="501.91" width="1.1" height="1.1"/>
<rect x="127.63" y="512.17" width="1.1" height="1.1"/>
<rect x="127.63" y="522.44" width="1.1" height="1.1"/>
<rect x="127.63" y="532.70" width="1.1" height="1.1"/>
<rect x="127.63" y="542.97" width="1.1" height="1.1"/>
<rect x="137.89" y="19.45" width="1.1" height="1.1"/>
<rect x="137.89" y="29.71" width="1.1" height="1.1"/>
<rect x="137.89" y="39.98" width="1.1" height="1.1"/>
<rect x="137.89" y="50.25" width="1.1" height="1.1"/>
<rect x="137.89" y="60.51" width="1.1" height="1.1"/>
<rect x="137.89" y="70.78" width="1.1" height="1.1"/>
<rect x="137.89" y="81.04" width="1.1" height="1.1"/>
<rect x="137.89" y="91.31" width="1.1" height="1.1"/>
<rect x="137.89" y="101.57" width="1.1" height="1.1"/>
<rect x="137.89" y="111.84" width="1.1" height="1.1"/>
<rect x="137.89" y="122.10" width="1.1" height="1.1"/>
<rect x="137.89" y="132.37" width="1.1" height="1.1"/>
<rect x="137.89" y="142.63" width="1.1" height="1.1"/>
<rect x="137.89" y="152.89" width="1.1" height="1.1"/>
<rect x="137.89" y="163.16" width="1.1" height="1.1"/>
<rect x="137.89" y="173.43" width="1.1" height="1.1"/>
<rect x="137.89" y="183.69" width="1.1" height="1.1"/>
<rect x="137.89" y="193.95" width="1.1" height="1.1"/>
<rect x="137.89" y="204.22" width="1.1" height="1.1"/>
<rect x="137.89" y="214.49" width="1.1" height="1.1"/>
<rect x="137.89" y="224.75" width="1.1" height="1.1"/>
<rect x="137.89" y="235.01" width="1.1" height="1.1"/>
<rect x="137.89" y="245.28" width="1.1" height="1.1"/>
<rect x="137.89" y="255.55" width="1.1" height="1.1"/>
<rect x="137.89" y="265.81" width="1.1" height="1.1"/>
<rect x="137.89" y="276.07" width="1.1" height="1.1"/>
<rect x="137.89" y="286.34" width="1.1" height="1.1"/>
<rect x="137.89" y="296.61" width="1.1" height="1.1"/>
<rect x="137.89" y="306.87" width="1.1" height="1.1"/>
<rect x="137.89" y="317.13" width="1.1" height="1.1"/>
<rect x="137.89" y="327.40" width="1.1" height="1.1"/>
<rect x="137.89" y="337.67" width="1.1" height="1.1"/>
<rect x="137.89" y="347.93" width="1.1" height="1.1"/>
<rect x="137.89" y="358.19" width="1.1" height="1.1"/>
<rect x="137.89" y="368.46" width="1.1" height="1.1"/>
<rect x="137.89" y="378.73" width="1.1" height="1.1"/>
<rect x="137.89" y="388.99" width="1.1" height="1.1"/>
<rect x="137.89" y="399.25" width="1.1" height="1.1"/>
<rect x="137.89" y="409.52" width="1.1" height="1.1"/>
<rect x="137.89" y="419.79" width="1.1" height="1.1"/>
<rect x="137.89" y="430.05" width="1.1" height="1.1"/>
<rect x="137.89" y="440.31" width="1.1" height="1.1"/>
<rect x="137.89" y="450.58" width="1.1" height="1.1"/>
<rect x="137.89" y="460.85" width="1.1" height="1.1"/>
<rect x="137.89" y="471.11" width="1.1" height="1.1"/>
<rect x="137.89" y="481.38" width="1.1" height="1.1"/>
<rect x="137.89" y="491.64" width="1.1" height="1.1"/>
<rect x="137.89" y="501.91" width="1.1" height="1.1"/>
<rect x="137.89" y="512.17" width="1.1" height="1.1"/>
<rect x="137.89" y="522.44" width="1.1" height="1.1"/>
<rect x="137.89" y="532.70" width="1.1" height="1.1"/>
<rect x="137.89" y="542.97" width="1.1" height="1.1"/>
<rect x="148.16" y="19.45" width="1.1" height="1.1"/>
<rect x="148.16" y="29.71" width="1.1" height="1.1"/>
<rect x="148.16" y="39.98" width="1.1" height="1.1"/>
<rect x="148.16" y="50.25" width="1.1" height="1.1"/>
<rect x="148.16" y="60.51" width="1.1" height="1.1"/>
<rect x="148.16" y="70.78" width="1.1" height="1.1"/>
<rect x="148.16" y="81.04" width="1.1" height="1.1"/>
<rect x="148.16" y="91.31" width="1.1" height="1.1"/>
<rect x="148.16" y="101.57" width="1.1" height="1.1"/>
<rect x="148.16" y="111.84" width="1.1" height="1.1"/>
<rect x="148.16" y="122.10" width="1.1" height="1.1"/>
<rect x="148.16" y="132.37" width="1.1" height="1.1"/>
<rect x="148.16" y="142.63" width="1.1" height="1.1"/>
<rect x="148.16" y="152.89" width="1.1" height="1.1"/>
<rect x="148.16" y="163.16" width="1.1" height="1.1"/>
<rect x="148.16" y="173.43" width="1.1" height="1.1"/>
<rect x="148.16" y="183.69" width="1.1" height="1.1"/>
<rect x="148.16" y="193.95" width="1.1" height="1.1"/>
<rect x="148.16" y="204.22" width="1.1" height="1.1"/>
<rect x="148.16" y="214.49" width="1.1" height="1.1"/>
<rect x="148.16" y="224.75" width="1.1" height="1.1"/>
<rect x="148.16" y="235.01" width="1.1" height="1.1"/>
<rect x="148.16" y="245.28" width="1.1" height="1.1"/>
<rect x="148.16" y="255.55" width="1.1" height="1.1"/>
<rect x="148.16" y="265.81" width="1.1" height="1.1"/>
<rect x="148.16" y="276.07" width="1.1" height="1.1"/>
<rect x="148.16" y="286.34" width="1.1" height="1.1"/>
<rect x="148.16" y="296.61" width="1.1" height="1.1"/>
<rect x="148.16" y="306.87" width="1.1" height="1.1"/>
<rect x="148.16" y="317.13" width="1.1" height="1.1"/>
<rect x="148.16" y="327.40" width="1.1" height="1.1"/>
<rect x="148.16" y="337.67" width="1.1" height="1.1"/>
<rect x="148.16" y="347.93" width="1.1" height="1.1"/>
<rect x="148.16" y="358.19" width="1.1" height="1.1"/>
<rect x="148.16" y="368.46" width="1.1" height="1.1"/>
<rect x="148.16" y="378.73" width="1.1" height="1.1"/>
<rect x="148.16" y="388.99" width="1.1" height="1.1"/>
<rect x="148.16" y="399.25" width="1.1" height="1.1"/>
<rect x="148.16" y="409.52" width="1.1" height="1.1"/>
<rect x="148.16" y="419.79" width="1.1" height="1.1"/>
<rect x="148.16" y="430.05" width="1.1" height="1.1"/>
<rect x="148.16" y="440.31" width="1.1" height="1.1"/>
<rect x="148.16" y="450.58" width="1.1" height="1.1"/>
<rect x="148.16" y="460.85" width="1.1" height="1.1"/>
<rect x="148.16" y="471.11" width="1.1" height="1.1"/>
<rect x="148.16" y="481.38" width="1.1" height="1.1"/>
<rect x="148.16" y="491.64" width="1.1" height="1.1"/>
<rect x="148.16" y="501.91" width="1.1" height="1.1"/>
<rect x="148.16" y="512.17" width="1.1" height="1.1"/>
<rect x="148.16" y="522.44" width="1.1" height="1.1"/>
<rect x="148.16" y="532.70" width="1.1" height="1.1"/>
<rect x="148.16" y="542.97" width="1.1" height="1.1"/>
<rect x="158.43" y="19.45" width="1.1" height="1.1"/>
<rect x="158.43" y="29.71" width="1.1" height="1.1"/>
<rect x="158.43" y="39.98" width="1.1" height="1.1"/>
<rect x="158.43" y="50.25" width="1.1" height="1.1"/>
<rect x="158.43" y="60.51" width="1.1" height="1.1"/>
<rect x="158.43" y="70.78" width="1.1" height="1.1"/>
<rect x="158.43" y="81.04" width="1.1" height="1.1"/>
<rect x="158.43" y="91.31" width="1.1" height="1.1"/>
<rect x="158.43" y="101.57" width="1.1" height="1.1"/>
<rect x="158.43" y="111.84" width="1.1" height="1.1"/>
<rect x="158.43" y="122.10" width="1.1" height="1.1"/>
<rect x="158.43" y="132.37" width="1.1" height="1.1"/>
<rect x="158.43" y="142.63" width="1.1" height="1.1"/>
<rect x="158.43" y="152.89" width="1.1" height="1.1"/>
<rect x="158.43" y="163.16" width="1.1" height="1.1"/>
<rect x="158.43" y="173.43" width="1.1" height="1.1"/>
<rect x="158.43" y="183.69" width="1.1" height="1.1"/>
<rect x="158.43" y="193.95" width="1.1" height="1.1"/>
<rect x="158.43" y="204.22" width="1.1" height="1.1"/>
<rect x="158.43" y="214.49" width="1.1" height="1.1"/>
<rect x="158.43" y="224.75" width="1.1" height="1.1"/>
<rect x="158.43" y="235.01" width="1.1" height="1.1"/>
<rect x="158.43" y="245.28" width="1.1" height="1.1"/>
<rect x="158.43" y="255.55" width="1.1" height="1.1"/>
<rect x="158.43" y="265.81" width="1.1" height="1.1"/>
<rect x="158.43" y="276.07" width="1.1" height="1.1"/>
<rect x="158.43" y="286.34" width="1.1" height="1.1"/>
<rect x="158.43" y="296.61" width="1.1" height="1.1"/>
<rect x="158.43" y="306.87" width="1.1" height="1.1"/>
<rect x="158.43" y="317.13" width="1.1" height="1.1"/>
<rect x="158.43" y="327.40" width="1.1" height="1.1"/>
<rect x="158.43" y="337.67" width="1.1" height="1.1"/>
<rect x="158.43" y="347.93" width="1.1" height="1.1"/>
<rect x="158.43" y="358.19" width="1.1" height="1.1"/>
<rect x="158.43" y="368.46" width="1.1" height="1.1"/>
<rect x="158.43" y="378.73" width="1.1" height="1.1"/>
<rect x="158.43" y="388.99" width="1.1" height="1.1"/>
<rect x="158.43" y="399.25" width="1.1" height="1.1"/>
<rect x="158.43" y="409.52" width="1.1" height="1.1"/>
<rect x="158.43" y="419.79" width="1.1" height="1.1"/>
<rect x="158.43" y="430.05" width="1.1" height="1.1"/>
<rect x="158.43" y="440.31" width="1.1" height="1.1"/>
<rect x="158.43" y="450.58" width="1.1" height="1.1"/>
<rect x="158.43" y="460.85" width="1.1" height="1.1"/>
<rect x="158.43" y="471.11" width="1.1" height="1.1"/>
<rect x="158.43" y="481.38" width="1.1" height="1.1"/>
<rect x="158.43" y="491.64" width="1.1" height="1.1"/>
<rect x="158.43" y="501.91" width="1.1" height="1.1"/>
<rect x="158.43" y="512.17" width="1.1" height="1.1"/>
<rect x="158.43" y="522.44" width="1.1" height="1.1"/>
<rect x="158.43" y="532.70" width="1.1" height="1.1"/>
<rect x="158.43" y="542.97" width="1.1" height="1.1"/>
<rect x="168.69" y="19.45" width="1.1" height="1.1"/>
<rect x="168.69" y="29.71" width="1.1" height="1.1"/>
<rect x="168.69" y="39.98" width="1.1" height="1.1"/>
<rect x="168.69" y="50.25" width="1.1" height="1.1"/>
<rect x="168.69" y="60.51" width="1.1" height="1.1"/>
<rect x="168.69" y="70.78" width="1.1" height="1.1"/>
<rect x="168.69" y="81.04" width="1.1" height="1.1"/>
<rect x="168.69" y="91.31" width="1.1" height="1.1"/>
<rect x="168.69" y="101.57" width="1.1" height="1.1"/>
<rect x="168.69" y="111.84" width="1.1" height="1.1"/>
<rect x="168.69" y="122.10" width="1.1" height="1.1"/>
<rect x="168.69" y="132.37" width="1.1" height="1.1"/>
<rect x="168.69" y="142.63" width="1.1" height="1.1"/>
<rect x="168.69" y="152.89" width="1.1" height="1.1"/>
<rect x="168.69" y="163.16" width="1.1" height="1.1"/>
<rect x="168.69" y="173.43" width="1.1" height="1.1"/>
<rect x="168.69" y="183.69" width="1.1" height="1.1"/>
<rect x="168.69" y="193.95" width="1.1" height="1.1"/>
<rect x="168.69" y="204.22" width="1.1" height="1.1"/>
<rect x="168.69" y="214.49" width="1.1" height="1.1"/>
<rect x="168.69" y="224.75" width="1.1" height="1.1"/>
<rect x="168.69" y="235.01" width="1.1" height="1.1"/>
<rect x="168.69" y="245.28" width="1.1" height="1.1"/>
<rect x="168.69" y="255.55" width="1.1" height="1.1"/>
<rect x="168.69" y="265.81" width="1.1" height="1.1"/>
<rect x="168.69" y="276.07" width="1.1" height="1.1"/>
<rect x="168.69" y="286.34" width="1.1" height="1.1"/>
<rect x="168.69" y="296.61" width="1.1" height="1.1"/>
<rect x="168.69" y="306.87" width="1.1" height="1.1"/>
<rect x="168.69" y="317.13" width="1.1" height="1.1"/>
<rect x="168.69" y="327.40" width="1.1" height="1.1"/>
<rect x="168.69" y="337.67" width="1.1" height="1.1"/>
<rect x="168.69" y="347.93" width="1.1" height="1.1"/>
<rect x="168.69" y="358.19" width="1.1" height="1.1"/>
<rect x="168.69" y="368.46" width="1.1" height="1.1"/>
<rect x="168.69" y="378.73" width="1.1" height="1.1"/>
<rect x="168.69" y="388.99" width="1.1" height="1.1"/>
<rect x="168.69" y="399.25" width="1.1" height="1.1"/>
<rect x="168.69" y="409.52" width="1.1" height="1.1"/>
<rect x="168.69" y="419.79" width="1.1" height="1.1"/>
<rect x="168.69" y="430.05" width="1.1" height="1.1"/>
<rect x="168.69" y="440.31" width="1.1" height="1.1"/>
<rect x="168.69" y="450.58" width="1.1" height="1.1"/>
<rect x="168.69" y="460.85" width="1.1" height="1.1"/>
<rect x="168.69" y="471.11" width="1.1" height="1.1"/>
<rect x="168.69" y="481.38" width="1.1" height="1.1"/>
<rect x="168.69" y="491.64" width="1.1" height="1.1"/>
<rect x="168.69" y="501.91" width="1.1" height="1.1"/>
<rect x="168.69" y="512.17" width="1.1" height="1.1"/>
<rect x="168.69" y="522.44" width="1.1" height="1.1"/>
<rect x="168.69" y="532.70" width="1.1" height="1.1"/>
<rect x="168.69" y="542.97" width="1.1" height="1.1"/>
<rect x="178.95" y="19.45" width="1.1" height="1.1"/>
<rect x="178.95" y="29.71" width="1.1" height="1.1"/>
<rect x="178.95" y="39.98" width="1.1" height="1.1"/>
<rect x="178.95" y="50.25" width="1.1" height="1.1"/>
<rect x="178.95" y="60.51" width="1.1" height="1.1"/>
<rect x="178.95" y="70.78" width="1.1" height="1.1"/>
<rect x="178.95" y="81.04" width="1.1" height="1.1"/>
<rect x="178.95" y="91.31" width="1.1" height="1.1"/>
<rect x="178.95" y="101.57" width="1.1" height="1.1"/>
<rect x="178.95" y="111.84" width="1.1" height="1.1"/>
<rect x="178.95" y="122.10" width="1.1" height="1.1"/>
<rect x="178.95" y="132.37" width="1.1" height="1.1"/>
<rect x="178.95" y="142.63" width="1.1" height="1.1"/>
<rect x="178.95" y="152.89" width="1.1" height="1.1"/>
<rect x="178.95" y="163.16" width="1.1" height="1.1"/>
<rect x="178.95" y="173.43" width="1.1" height="1.1"/>
<rect x="178.95" y="183.69" width="1.1" height="1.1"/>
<rect x="178.95" y="193.95" width="1.1" height="1.1"/>
<rect x="178.95" y="204.22" width="1.1" height="1.1"/>
<rect x="178.95" y="214.49" width="1.1" height="1.1"/>
<rect x="178.95" y="224.75" width="1.1" height="1.1"/>
<rect x="178.95" y="235.01" width="1.1" height="1.1"/>
<rect x="178.95" y="245.28" width="1.1" height="1.1"/>
<rect x="178.95" y="255.55" width="1.1" height="1.1"/>
<rect x="178.95" y="265.81" width="1.1" height="1.1"/>
<rect x="178.95" y="276.07" width="1.1" height="1.1"/>
<rect x="178.95" y="286.34" width="1.1" height="1.1"/>
<rect x="178.95" y="296.61" width="1.1" height="1.1"/>
<rect x="178.95" y="306.87" width="1.1" height="1.1"/>
<rect x="178.95" y="317.13" width="1.1" height="1.1"/>
<rect x="178.95" y="327.40" width="1.1" height="1.1"/>
<rect x="178.95" y="337.67" width="1.1" height="1.1"/>
<rect x="178.95" y="347.93" width="1.1" height="1.1"/>
<rect x="178.95" y="358.19" width="1.1" height="1.1"/>
<rect x="178.95" y="368.46" width="1.1" height="1.1"/>
<rect x="178.95" y="378.73" width="1.1" height="1.1"/>
<rect x="178.95" y="388.99" width="1.1" height="1.1"/>
<rect x="178.95" y="399.25" width="1.1" height="1.1"/>
<rect x="178.95" y="409.52" width="1.1" height="1.1"/>
<rect x="178.95" y="419.79" width="1.1" height="1.1"/>
<rect x="178.95" y="430.05" width="1.1" height="1.1"/>
<rect x="178.95" y="440.31" width="1.1" height="1.1"/>
<rect x="178.95" y="450.58" width="1.1" height="1.1"/>
<rect x="178.95" y="460.85" width="1.1" height="1.1"/>
<rect x="178.95" y="471.11" width="1.1" height="1.1"/>
<rect x="178.95" y="481.38" width="1.1" height="1.1"/>
<rect x="178.95" y="491.64" width="1.1" height="1.1"/>
<rect x="178.95" y="501.91" width="1.1" height="1.1"/>
<rect x="178.95" y="512.17" width="1.1" height="1.1"/>
<rect x="178.95" y="522.44" width="1.1" height="1.1"/>
<rect x="178.95" y="532.70" width="1.1" height="1.1"/>
<rect x="178.95" y="542.97" width="1.1" height="1.1"/>
<rect x="189.22" y="19.45" width="1.1" height="1.1"/>
<rect x="189.22" y="29.71" width="1.1" height="1.1"/>
<rect x="189.22" y="39.98" width="1.1" height="1.1"/>
<rect x="189.22" y="50.25" width="1.1" height="1.1"/>
<rect x="189.22" y="60.51" width="1.1" height="1.1"/>
<rect x="189.22" y="70.78" width="1.1" height="1.1"/>
<rect x="189.22" y="81.04" width="1.1" height="1.1"/>
<rect x="189.22" y="91.31" width="1.1" height="1.1"/>
<rect x="189.22" y="101.57" width="1.1" height="1.1"/>
<rect x="189.22" y="111.84" width="1.1" height="1.1"/>
<rect x="189.22" y="122.10" width="1.1" height="1.1"/>
<rect x="189.22" y="132.37" width="1.1" height="1.1"/>
<rect x="189.22" y="142.63" width="1.1" height="1.1"/>
<rect x="189.22" y="152.89" width="1.1" height="1.1"/>
<rect x="189.22" y="163.16" width="1.1" height="1.1"/>
<rect x="189.22" y="173.43" width="1.1" height="1.1"/>
<rect x="189.22" y="183.69" width="1.1" height="1.1"/>
<rect x="189.22" y="193.95" width="1.1" height="1.1"/>
<rect x="189.22" y="204.22" width="1.1" height="1.1"/>
<rect x="189.22" y="214.49" width="1.1" height="1.1"/>
<rect x="189.22" y="224.75" width="1.1" height="1.1"/>
<rect x="189.22" y="235.01" width="1.1" height="1.1"/>
<rect x="189.22" y="245.28" width="1.1" height="1.1"/>
<rect x="189.22" y="255.55" width="1.1" height="1.1"/>
<rect x="189.22" y="265.81" width="1.1" height="1.1"/>
<rect x="189.22" y="276.07" width="1.1" height="1.1"/>
<rect x="189.22" y="286.34" width="1.1" height="1.1"/>
<rect x="189.22" y="296.61" width="1.1" height="1.1"/>
<rect x="189.22" y="306.87" width="1.1" height="1.1"/>
<rect x="189.22" y="317.13" width="1.1" height="1.1"/>
<rect x="189.22" y="327.40" width="1.1" height="1.1"/>
<rect x="189.22" y="337.67" width="1.1" height="1.1"/>
<rect x="189.22" y="347.93" width="1.1" height="1.1"/>
<rect x="189.22" y="358.19" width="1.1" height="1.1"/>
<rect x="189.22" y="368.46" width="1.1" height="1.1"/>
<rect x="189.22" y="378.73" width="1.1" height="1.1"/>
<rect x="189.22" y="388.99" width="1.1" height="1.1"/>
<rect x="189.22" y="399.25" width="1.1" height="1.1"/>
<rect x="189.22" y="409.52" width="1.1" height="1.1"/>
<rect x="189.22" y="419.79" width="1.1" height="1.1"/>
<rect x="189.22" y="430.05" width="1.1" height="1.1"/>
<rect x="189.22" y="440.31" width="1.1" height="1.1"/>
<rect x="189.22" y="450.58" width="1.1" height="1.1"/>
<rect x="189.22" y="460.85" width="1.1" height="1.1"/>
<rect x="189.22" y="471.11" width="1.1" height="1.1"/>
<rect x="189.22" y="481.38" width="1.1" height="1.1"/>
<rect x="189.22" y="491.64" width="1.1" height="1.1"/>
<rect x="189.22" y="501.91" width="1.1" height="1.1"/>
<rect x="189.22" y="512.17" width="1.1" height="1.1"/>
<rect x="189.22" y="522.44" width="1.1" height="1.1"/>
<rect x="189.22" y="532.70" width="1.1" height="1.1"/>
<rect x="189.22" y="542.97" width="1.1" height="1.1"/>
<rect x="199.49" y="19.45" width="1.1" height="1.1"/>
<rect x="199.49" y="29.71" width="1.1" height="1.1"/>
<rect x="199.49" y="39.98" width="1.1" height="1.1"/>
<rect x="199.49" y="50.25" width="1.1" height="1.1"/>
<rect x="199.49" y="60.51" width="1.1" height="1.1"/>
<rect x="199.49" y="70.78" width="1.1" height="1.1"/>
<rect x="199.49" y="81.04" width="1.1" height="1.1"/>
<rect x="199.49" y="91.31" width="1.1" height="1.1"/>
<rect x="199.49" y="101.57" width="1.1" height="1.1"/>
<rect x="199.49" y="111.84" width="1.1" height="1.1"/>
<rect x="199.49" y="122.10" width="1.1" height="1.1"/>
<rect x="199.49" y="132.37" width="1.1" height="1.1"/>
<rect x="199.49" y="142.63" width="1.1" height="1.1"/>
<rect x="199.49" y="152.89" width="1.1" height="1.1"/>
<rect x="199.49" y="163.16" width="1.1" height="1.1"/>
<rect x="199.49" y="173.43" width="1.1" height="1.1"/>
<rect x="199.49" y="183.69" width="1.1" height="1.1"/>
<rect x="199.49" y="193.95" width="1.1" height="1.1"/>
<rect x="199.49" y="204.22" width="1.1" height="1.1"/>
<rect x="199.49" y="214.49" width="1.1" height="1.1"/>
<rect x="199.49" y="224.75" width="1.1" height="1.1"/>
<rect x="199.49" y="235.01" width="1.1" height="1.1"/>
<rect x="199.49" y="245.28" width="1.1" height="1.1"/>
<rect x="199.49" y="255.55" width="1.1" height="1.1"/>
<rect x="199.49" y="265.81" width="1.1" height="1.1"/>
<rect x="199.49" y="276.07" width="1.1" height="1.1"/>
<rect x="199.49" y="286.34" width="1.1" height="1.1"/>
<rect x="199.49" y="296.61" width="1.1" height="1.1"/>
<rect x="199.49" y="306.87" width="1.1" height="1.1"/>
<rect x="199.49" y="317.13" width="1.1" height="1.1"/>
<rect x="199.49" y="327.40" width="1.1" height="1.1"/>
<rect x="199.49" y="337.67" width="1.1" height="1.1"/>
<rect x="199.49" y="347.93" width="1.1" height="1.1"/>
<rect x="199.49" y="358.19" width="1.1" height="1.1"/>
<rect x="199.49" y="368.46" width="1.1" height="1.1"/>
<rect x="199.49" y="378.73" width="1.1" height="1.1"/>
<rect x="199.49" y="388.99" width="1.1" height="1.1"/>
<rect x="199.49" y="399.25" width="1.1" height="1.1"/>
<rect x="199.49" y="409.52" width="1.1" height="1.1"/>
<rect x="199.49" y="419.79" width="1.1" height="1.1"/>
<rect x="199.49" y="430.05" width="1.1" height="1.1"/>
<rect x="199.49" y="440.31" width="1.1" height="1.1"/>
<rect x="199.49" y="450.58" width="1.1" height="1.1"/>
<rect x="199.49" y="460.85" width="1.1" height="1.1"/>
<rect x="199.49" y="471.11" width="1.1" height="1.1"/>
<rect x="199.49" y="481.38" width="1.1" height="1.1"/>
<rect x="199.49" y="491.64" width="1.1" height="1.1"/>
<rect x="199.49" y="501.91" width="1.1" height="1.1"/>
<rect x="199.49" y="512.17" width="1.1" height="1.1"/>
<rect x="199.49" y="522.44" width="1.1" height="1.1"/>
<rect x="199.49" y="532.70" width="1.1" height="1.1"/>
<rect x="199.49" y="542.97" width="1.1" height="1.1"/>
<rect x="209.75" y="19.45" width="1.1" height="1.1"/>
<rect x="209.75" y="29.71" width="1.1" height="1.1"/>
<rect x="209.75" y="39.98" width="1.1" height="1.1"/>
<rect x="209.75" y="50.25" width="1.1" height="1.1"/>
<rect x="209.75" y="60.51" width="1.1" height="1.1"/>
<rect x="209.75" y="70.78" width="1.1" height="1.1"/>
<rect x="209.75" y="81.04" width="1.1" height="1.1"/>
<rect x="209.75" y="91.31" width="1.1" height="1.1"/>
<rect x="209.75" y="101.57" width="1.1" height="1.1"/>
<rect x="209.75" y="111.84" width="1.1" height="1.1"/>
<rect x="209.75" y="122.10" width="1.1" height="1.1"/>
<rect x="209.75" y="132.37" width="1.1" height="1.1"/>
<rect x="209.75" y="142.63" width="1.1" height="1.1"/>
<rect x="209.75" y="152.89" width="1.1" height="1.1"/>
<rect x="209.75" y="163.16" width="1.1" height="1.1"/>
<rect x="209.75" y="173.43" width="1.1" height="1.1"/>
<rect x="209.75" y="183.69" width="1.1" height="1.1"/>
<rect x="209.75" y="193.95" width="1.1" height="1.1"/>
<rect x="209.75" y="204.22" width="1.1" height="1.1"/>
<rect x="209.75" y="214.49" width="1.1" height="1.1"/>
<rect x="209.75" y="224.75" width="1.1" height="1.1"/>
<rect x="209.75" y="235.01" width="1.1" height="1.1"/>
<rect x="209.75" y="245.28" width="1.1" height="1.1"/>
<rect x="209.75" y="255.55" width="1.1" height="1.1"/>
<rect x="209.75" y="265.81" width="1.1" height="1.1"/>
<rect x="209.75" y="276.07" width="1.1" height="1.1"/>
<rect x="209.75" y="286.34" width="1.1" height="1.1"/>
<rect x="209.75" y="296.61" width="1.1" height="1.1"/>
<rect x="209.75" y="306.87" width="1.1" height="1.1"/>
<rect x="209.75" y="317.13" width="1.1" height="1.1"/>
<rect x="209.75" y="327.40" width="1.1" height="1.1"/>
<rect x="209.75" y="337.67" width="1.1" height="1.1"/>
<rect x="209.75" y="347.93" width="1.1" height="1.1"/>
<rect x="209.75" y="358.19" width="1.1" height="1.1"/>
<rect x="209.75" y="368.46" width="1.1" height="1.1"/>
<rect x="209.75" y="378.73" width="1.1" height="1.1"/>
<rect x="209.75" y="388.99" width="1.1" height="1.1"/>
<rect x="209.75" y="399.25" width="1.1" height="1.1"/>
<rect x="209.75" y="409.52" width="1.1" height="1.1"/>
<rect x="209.75" y="419.79" width="1.1" height="1.1"/>
<rect x="209.75" y="430.05" width="1.1" height="1.1"/>
<rect x="209.75" y="440.31" width="1.1" height="1.1"/>
<rect x="209.75" y="450.58" width="1.1" height="1.1"/>
<rect x="209.75" y="460.85" width="1.1" height="1.1"/>
<rect x="209.75" y="471.11" width="1.1" height="1.1"/>
<rect x="209.75" y="481.38" width="1.1" height="1.1"/>
<rect x="209.75" y="491.64" width="1.1" height="1.1"/>
<rect x="209.75" y="501.91" width="1.1" height="1.1"/>
<rect x="209.75" y="512.17" width="1.1" height="1.1"/>
<rect x="209.75" y="522.44" width="1.1" height="1.1"/>
<rect x="209.75" y="532.70" width="1.1" height="1.1"/>
<rect x="209.75" y="542.97" width="1.1" height="1.1"/>
<rect x="220.01" y="19.45" width="1.1" height="1.1"/>
<rect x="220.01" y="29.71" width="1.1" height="1.1"/>
<rect x="220.01" y="39.98" width="1.1" height="1.1"/>
<rect x="220.01" y="50.25" width="1.1" height="1.1"/>
<rect x="220.01" y="60.51" width="1.1" height="1.1"/>
<rect x="220.01" y="70.78" width="1.1" height="1.1"/>
<rect x="220.01" y="81.04" width="1.1" height="1.1"/>
<rect x="220.01" y="91.31" width="1.1" height="1.1"/>
<rect x="220.01" y="101.57" width="1.1" height="1.1"/>
<rect x="220.01" y="111.84" width="1.1" height="1.1"/>
<rect x="220.01" y="122.10" width="1.1" height="1.1"/>
<rect x="220.01" y="132.37" width="1.1" height="1.1"/>
<rect x="220.01" y="142.63" width="1.1" height="1.1"/>
<rect x="220.01" y="152.89" width="1.1" height="1.1"/>
<rect x="220.01" y="163.16" width="1.1" height="1.1"/>
<rect x="220.01" y="173.43" width="1.1" height="1.1"/>
<rect x="220.01" y="183.69" width="1.1" height="1.1"/>
<rect x="220.01" y="193.95" width="1.1" height="1.1"/>
<rect x="220.01" y="204.22" width="1.1" height="1.1"/>
<rect x="220.01" y="214.49" width="1.1" height="1.1"/>
<rect x="220.01" y="224.75" width="1.1" height="1.1"/>
<rect x="220.01" y="235.01" width="1.1" height="1.1"/>
<rect x="220.01" y="245.28" width="1.1" height="1.1"/>
<rect x="220.01" y="255.55" width="1.1" height="1.1"/>
<rect x="220.01" y="265.81" width="1.1" height="1.1"/>
<rect x="220.01" y="276.07" width="1.1" height="1.1"/>
<rect x="220.01" y="286.34" width="1.1" height="1.1"/>
<rect x="220.01" y="296.61" width="1.1" height="1.1"/>
<rect x="220.01" y="306.87" width="1.1" height="1.1"/>
<rect x="220.01" y="317.13" width="1.1" height="1.1"/>
<rect x="220.01" y="327.40" width="1.1" height="1.1"/>
<rect x="220.01" y="337.67" width="1.1" height="1.1"/>
<rect x="220.01" y="347.93" width="1.1" height="1.1"/>
<rect x="220.01" y="358.19" width="1.1" height="1.1"/>
<rect x="220.01" y="368.46" width="1.1" height="1.1"/>
<rect x="220.01" y="378.73" width="1.1" height="1.1"/>
<rect x="220.01" y="388.99" width="1.1" height="1.1"/>
<rect x="220.01" y="399.25" width="1.1" height="1.1"/>
<rect x="220.01" y="409.52" width="1.1" height="1.1"/>
<rect x="220.01" y="419.79" width="1.1" height="1.1"/>
<rect x="220.01" y="430.05" width="1.1" height="1.1"/>
<rect x="220.01" y="440.31" width="1.1" height="1.1"/>
<rect x="220.01" y="450.58" width="1.1" height="1.1"/>
<rect x="220.01" y="460.85" width="1.1" height="1.1"/>
<rect x="220.01" y="471.11" width="1.1" height="1.1"/>
<rect x="220.01" y="481.38" width="1.1" height="1.1"/>
<rect x="220.01" y="491.64" width="1.1" height="1.1"/>
<rect x="220.01" y="501.91" width="1.1" height="1.1"/>
<rect x="220.01" y="512.17" width="1.1" height="1.1"/>
<rect x="220.01" y="522.44" width="1.1" height="1.1"/>
<rect x="220.01" y="532.70" width="1.1" height="1.1"/>
<rect x="220.01" y="542.97" width="1.1" height="1.1"/>
<rect x="230.28" y="19.45" width="1.1" height="1.1"/>
<rect x="230.28" y="29.71" width="1.1" height="1.1"/>
<rect x="230.28" y="39.98" width="1.1" height="1.1"/>
<rect x="230.28" y="50.25" width="1.1" height="1.1"/>
<rect x="230.28" y="60.51" width="1.1" height="1.1"/>
<rect x="230.28" y="70.78" width="1.1" height="1.1"/>
<rect x="230.28" y="81.04" width="1.1" height="1.1"/>
<rect x="230.28" y="91.31" width="1.1" height="1.1"/>
<rect x="230.28" y="101.57" width="1.1" height="1.1"/>
<rect x="230.28" y="111.84" width="1.1" height="1.1"/>
<rect x="230.28" y="122.10" width="1.1" height="1.1"/>
<rect x="230.28" y="132.37" width="1.1" height="1.1"/>
<rect x="230.28" y="142.63" width="1.1" height="1.1"/>
<rect x="230.28" y="152.89" width="1.1" height="1.1"/>
<rect x="230.28" y="163.16" width="1.1" height="1.1"/>
<rect x="230.28" y="173.43" width="1.1" height="1.1"/>
<rect x="230.28" y="183.69" width="1.1" height="1.1"/>
<rect x="230.28" y="193.95" width="1.1" height="1.1"/>
<rect x="230.28" y="204.22" width="1.1" height="1.1"/>
<rect x="230.28" y="214.49" width="1.1" height="1.1"/>
<rect x="230.28" y="224.75" width="1.1" height="1.1"/>
<rect x="230.28" y="235.01" width="1.1" height="1.1"/>
<rect x="230.28" y="245.28" width="1.1" height="1.1"/>
<rect x="230.28" y="255.55" width="1.1" height="1.1"/>
<rect x="230.28" y="265.81" width="1.1" height="1.1"/>
<rect x="230.28" y="276.07" width="1.1" height="1.1"/>
<rect x="230.28" y="286.34" width="1.1" height="1.1"/>
<rect x="230.28" y="296.61" width="1.1" height="1.1"/>
<rect x="230.28" y="306.87" width="1.1" height="1.1"/>
<rect x="230.28" y="317.13" width="1.1" height="1.1"/>
<rect x="230.28" y="327.40" width="1.1" height="1.1"/>
<rect x="230.28" y="337.67" width="1.1" height="1.1"/>
<rect x="230.28" y="347.93" width="1.1" height="1.1"/>
<rect x="230.28" y="358.19" width="1.1" height="1.1"/>
<rect x="230.28" y="368.46" width="1.1" height="1.1"/>
<rect x="230.28" y="378.73" width="1.1" height="1.1"/>
<rect x="230.28" y="388.99" width="1.1" height="1.1"/>
<rect x="230.28" y="399.25" width="1.1" height="1.1"/>
<rect x="230.28" y="409.52" width="1.1" height="1.1"/>
<rect x="230.28" y="419.79" width="1.1" height="1.1"/>
<rect x="230.28" y="430.05" width="1.1" height="1.1"/>
<rect x="230.28" y="440.31" width="1.1" height="1.1"/>
<rect x="230.28" y="450.58" width="1.1" height="1.1"/>
<rect x="230.28" y="460.85" width="1.1" height="1.1"/>
<rect x="230.28" y="471.11" width="1.1" height="1.1"/>
<rect x="230.28" y="481.38" width="1.1" height="1.1"/>
<rect x="230.28" y="491.64" width="1.1" height="1.1"/>
<rect x="230.28" y="501.91" width="1.1" height="1.1"/>
<rect x="230.28" y="512.17" width="1.1" height="1.1"/>
<rect x="230.28" y="522.44" width="1.1" height="1.1"/>
<rect x="230.28" y="532.70" width="1.1" height="1.1"/>
<rect x="230.28" y="542.97" width="1.1" height="1.1"/>
<rect x="240.55" y="19.45" width="1.1" height="1.1"/>
<rect x="240.55" y="29.71" width="1.1" height="1.1"/>
<rect x="240.55" y="39.98" width="1.1" height="1.1"/>
<rect x="240.55" y="50.25" width="1.1" height="1.1"/>
<rect x="240.55" y="60.51" width="1.1" height="1.1"/>
<rect x="240.55" y="70.78" width="1.1" height="1.1"/>
<rect x="240.55" y="81.04" width="1.1" height="1.1"/>
<rect x="240.55" y="91.31" width="1.1" height="1.1"/>
<rect x="240.55" y="101.57" width="1.1" height="1.1"/>
<rect x="240.55" y="111.84" width="1.1" height="1.1"/>
<rect x="240.55" y="122.10" width="1.1" height="1.1"/>
<rect x="240.55" y="132.37" width="1.1" height="1.1"/>
<rect x="240.55" y="142.63" width="1.1" height="1.1"/>
<rect x="240.55" y="152.89" width="1.1" height="1.1"/>
<rect x="240.55" y="163.16" width="1.1" height="1.1"/>
<rect x="240.55" y="173.43" width="1.1" height="1.1"/>
<rect x="240.55" y="183.69" width="1.1" height="1.1"/>
<rect x="240.55" y="193.95" width="1.1" height="1.1"/>
<rect x="240.55" y="204.22" width="1.1" height="1.1"/>
<rect x="240.55" y="214.49" width="1.1" height="1.1"/>
<rect x="240.55" y="224.75" width="1.1" height="1.1"/>
<rect x="240.55" y="235.01" width="1.1" height="1.1"/>
<rect x="240.55" y="245.28" width="1.1" height="1.1"/>
<rect x="240.55" y="255.55" width="1.1" height="1.1"/>
<rect x="240.55" y="265.81" width="1.1" height="1.1"/>
<rect x="240.55" y="276.07" width="1.1" height="1.1"/>
<rect x="240.55" y="286.34" width="1.1" height="1.1"/>
<rect x="240.55" y="296.61" width="1.1" height="1.1"/>
<rect x="240.55" y="306.87" width="1.1" height="1.1"/>
<rect x="240.55" y="317.13" width="1.1" height="1.1"/>
<rect x="240.55" y="327.40" width="1.1" height="1.1"/>
<rect x="240.55" y="337.67" width="1.1" height="1.1"/>
<rect x="240.55" y="347.93" width="1.1" height="1.1"/>
<rect x="240.55" y="358.19" width="1.1" height="1.1"/>
<rect x="240.55" y="368.46" width="1.1" height="1.1"/>
<rect x="240.55" y="378.73" width="1.1" height="1.1"/>
<rect x="240.55" y="388.99" width="1.1" height="1.1"/>
<rect x="240.55" y="399.25" width="1.1" height="1.1"/>
<rect x="240.55" y="409.52" width="1.1" height="1.1"/>
<rect x="240.55" y="419.79" width="1.1" height="1.1"/>
<rect x="240.55" y="430.05" width="1.1" height="1.1"/>
<rect x="240.55" y="440.31" width="1.1" height="1.1"/>
<rect x="240.55" y="450.58" width="1.1" height="1.1"/>
<rect x="240.55" y="460.85" width="1.1" height="1.1"/>
<rect x="240.55" y="471.11" width="1.1" height="1.1"/>
<rect x="240.55" y="481.38" width="1.1" height="1.1"/>
<rect x="240.55" y="491.64" width="1.1" height="1.1"/>
<rect x="240.55" y="501.91" width="1.1" height="1.1"/>
<rect x="240.55" y="512.17" width="1.1" height="1.1"/>
<rect x="240.55" y="522.44" width="1.1" height="1.1"/>
<rect x="240.55" y="532.70" width="1.1" height="1.1"/>
<rect x="240.55" y="542.97" width="1.1" height="1.1"/>
<rect x="250.81" y="19.45" width="1.1" height="1.1"/>
<rect x="250.81" y="29.71" width="1.1" height="1.1"/>
<rect x="250.81" y="39.98" width="1.1" height="1.1"/>
<rect x="250.81" y="50.25" width="1.1" height="1.1"/>
<rect x="250.81" y="60.51" width="1.1" height="1.1"/>
<rect x="250.81" y="70.78" width="1.1" height="1.1"/>
<rect x="250.81" y="81.04" width="1.1" height="1.1"/>
<rect x="250.81" y="91.31" width="1.1" height="1.1"/>
<rect x="250.81" y="101.57" width="1.1" height="1.1"/>
<rect x="250.81" y="111.84" width="1.1" height="1.1"/>
<rect x="250.81" y="122.10" width="1.1" height="1.1"/>
<rect x="250.81" y="132.37" width="1.1" height="1.1"/>
<rect x="250.81" y="142.63" width="1.1" height="1.1"/>
<rect x="250.81" y="152.89" width="1.1" height="1.1"/>
<rect x="250.81" y="163.16" width="1.1" height="1.1"/>
<rect x="250.81" y="173.43" width="1.1" height="1.1"/>
<rect x="250.81" y="183.69" width="1.1" height="1.1"/>
<rect x="250.81" y="193.95" width="1.1" height="1.1"/>
<rect x="250.81" y="204.22" width="1.1" height="1.1"/>
<rect x="250.81" y="214.49" width="1.1" height="1.1"/>
<rect x="250.81" y="224.75" width="1.1" height="1.1"/>
<rect x="250.81" y="235.01" width="1.1" height="1.1"/>
<rect x="250.81" y="245.28" width="1.1" height="1.1"/>
<rect x="250.81" y="255.55" width="1.1" height="1.1"/>
<rect x="250.81" y="265.81" width="1.1" height="1.1"/>
<rect x="250.81" y="276.07" width="1.1" height="1.1"/>
<rect x="250.81" y="286.34" width="1.1" height="1.1"/>
<rect x="250.81" y="296.61" width="1.1" height="1.1"/>
<rect x="250.81" y="306.87" width="1.1" height="1.1"/>
<rect x="250.81" y="317.13" width="1.1" height="1.1"/>
<rect x="250.81" y="327.40" width="1.1" height="1.1"/>
<rect x="250.81" y="337.67" width="1.1" height="1.1"/>
<rect x="250.81" y="347.93" width="1.1" height="1.1"/>
<rect x="250.81" y="358.19" width="1.1" height="1.1"/>
<rect x="250.81" y="368.46" width="1.1" height="1.1"/>
<rect x="250.81" y="378.73" width="1.1" height="1.1"/>
<rect x="250.81" y="388.99" width="1.1" height="1.1"/>
<rect x="250.81" y="399.25" width="1.1" height="1.1"/>
<rect x="250.81" y="409.52" width="1.1" height="1.1"/>
<rect x="250.81" y="419.79" width="1.1" height="1.1"/>
<rect x="250.81" y="430.05" width="1.1" height="1.1"/>
<rect x="250.81" y="440.31" width="1.1" height="1.1"/>
<rect x="250.81" y="450.58" width="1.1" height="1.1"/>
<rect x="250.81" y="460.85" width="1.1" height="1.1"/>
<rect x="250.81" y="471.11" width="1.1" height="1.1"/>
<rect x="250.81" y="481.38" width="1.1" height="1.1"/>
<rect x="250.81" y="491.64" width="1.1" height="1.1"/>
<rect x="250.81" y="501.91" width="1.1" height="1.1"/>
<rect x="250.81" y="512.17" width="1.1" height="1.1"/>
<rect x="250.81" y="522.44" width="1.1" height="1.1"/>
<rect x="250.81" y="532.70" width="1.1" height="1.1"/>
<rect x="250.81" y="542.97" width="1.1" height="1.1"/>
<rect x="261.07" y="19.45" width="1.1" height="1.1"/>
<rect x="261.07" y="29.71" width="1.1" height="1.1"/>
<rect x="261.07" y="39.98" width="1.1" height="1.1"/>
<rect x="261.07" y="50.25" width="1.1" height="1.1"/>
<rect x="261.07" y="60.51" width="1.1" height="1.1"/>
<rect x="261.07" y="70.78" width="1.1" height="1.1"/>
<rect x="261.07" y="81.04" width="1.1" height="1.1"/>
<rect x="261.07" y="91.31" width="1.1" height="1.1"/>
<rect x="261.07" y="101.57" width="1.1" height="1.1"/>
<rect x="261.07" y="111.84" width="1.1" height="1.1"/>
<rect x="261.07" y="122.10" width="1.1" height="1.1"/>
<rect x="261.07" y="132.37" width="1.1" height="1.1"/>
<rect x="261.07" y="142.63" width="1.1" height="1.1"/>
<rect x="261.07" y="152.89" width="1.1" height="1.1"/>
<rect x="261.07" y="163.16" width="1.1" height="1.1"/>
<rect x="261.07" y="173.43" width="1.1" height="1.1"/>
<rect x="261.07" y="183.69" width="1.1" height="1.1"/>
<rect x="261.07" y="193.95" width="1.1" height="1.1"/>
<rect x="261.07" y="204.22" width="1.1" height="1.1"/>
<rect x="261.07" y="214.49" width="1.1" height="1.1"/>
<rect x="261.07" y="224.75" width="1.1" height="1.1"/>
<rect x="261.07" y="235.01" width="1.1" height="1.1"/>
<rect x="261.07" y="245.28" width="1.1" height="1.1"/>
<rect x="261.07" y="255.55" width="1.1" height="1.1"/>
<rect x="261.07" y="265.81" width="1.1" height="1.1"/>
<rect x="261.07" y="276.07" width="1.1" height="1.1"/>
<rect x="261.07" y="286.34" width="1.1" height="1.1"/>
<rect x="261.07" y="296.61" width="1.1" height="1.1"/>
<rect x="261.07" y="306.87" width="1.1" height="1.1"/>
<rect x="261.07" y="317.13" width="1.1" height="1.1"/>
<rect x="261.07" y="327.40" width="1.1" height="1.1"/>
<rect x="261.07" y="337.67" width="1.1" height="1.1"/>
<rect x="261.07" y="347.93" width="1.1" height="1.1"/>
<rect x="261.07" y="358.19" width="1.1" height="1.1"/>
<rect x="261.07" y="368.46" width="1.1" height="1.1"/>
<rect x="261.07" y="378.73" width="1.1" height="1.1"/>
<rect x="261.07" y="388.99" width="1.1" height="1.1"/>
<rect x="261.07" y="399.25" width="1.1" height="1.1"/>
<rect x="261.07" y="409.52" width="1.1" height="1.1"/>
<rect x="261.07" y="419.79" width="1.1" height="1.1"/>
<rect x="261.07" y="430.05" width="1.1" height="1.1"/>
<rect x="261.07" y="440.31" width="1.1" height="1.1"/>
<rect x="261.07" y="450.58" width="1.1" height="1.1"/>
<rect x="261.07" y="460.85" width="1.1" height="1.1"/>
<rect x="261.07" y="471.11" width="1.1" height="1.1"/>
<rect x="261.07" y="481.38" width="1.1" height="1.1"/>
<rect x="261.07" y="491.64" width="1.1" height="1.1"/>
<rect x="261.07" y="501.91" width="1.1" height="1.1"/>
<rect x="261.07" y="512.17" width="1.1" height="1.1"/>
<rect x="261.07" y="522.44" width="1.1" height="1.1"/>
<rect x="261.07" y="532.70" width="1.1" height="1.1"/>
<rect x="261.07" y="542.97" width="1.1" height="1.1"/>
<rect x="271.34" y="19.45" width="1.1" height="1.1"/>
<rect x="271.34" y="29.71" width="1.1" height="1.1"/>
<rect x="271.34" y="39.98" width="1.1" height="1.1"/>
<rect x="271.34" y="50.25" width="1.1" height="1.1"/>
<rect x="271.34" y="60.51" width="1.1" height="1.1"/>
<rect x="271.34" y="70.78" width="1.1" height="1.1"/>
<rect x="271.34" y="81.04" width="1.1" height="1.1"/>
<rect x="271.34" y="91.31" width="1.1" height="1.1"/>
<rect x="271.34" y="101.57" width="1.1" height="1.1"/>
<rect x="271.34" y="111.84" width="1.1" height="1.1"/>
<rect x="271.34" y="122.10" width="1.1" height="1.1"/>
<rect x="271.34" y="132.37" width="1.1" height="1.1"/>
<rect x="271.34" y="142.63" width="1.1" height="1.1"/>
<rect x="271.34" y="152.89" width="1.1" height="1.1"/>
<rect x="271.34" y="163.16" width="1.1" height="1.1"/>
<rect x="271.34" y="173.43" width="1.1" height="1.1"/>
<rect x="271.34" y="183.69" width="1.1" height="1.1"/>
<rect x="271.34" y="193.95" width="1.1" height="1.1"/>
<rect x="271.34" y="204.22" width="1.1" height="1.1"/>
<rect x="271.34" y="214.49" width="1.1" height="1.1"/>
<rect x="271.34" y="224.75" width="1.1" height="1.1"/>
<rect x="271.34" y="235.01" width="1.1" height="1.1"/>
<rect x="271.34" y="245.28" width="1.1" height="1.1"/>
<rect x="271.34" y="255.55" width="1.1" height="1.1"/>
<rect x="271.34" y="265.81" width="1.1" height="1.1"/>
<rect x="271.34" y="276.07" width="1.1" height="1.1"/>
<rect x="271.34" y="286.34" width="1.1" height="1.1"/>
<rect x="271.34" y="296.61" width="1.1" height="1.1"/>
<rect x="271.34" y="306.87" width="1.1" height="1.1"/>
<rect x="271.34" y="317.13" width="1.1" height="1.1"/>
<rect x="271.34" y="327.40" width="1.1" height="1.1"/>
<rect x="271.34" y="337.67" width="1.1" height="1.1"/>
<rect x="271.34" y="347.93" width="1.1" height="1.1"/>
<rect x="271.34" y="358.19" width="1.1" height="1.1"/>
<rect x="271.34" y="368.46" width="1.1" height="1.1"/>
<rect x="271.34" y="378.73" width="1.1" height="1.1"/>
<rect x="271.34" y="388.99" width="1.1" height="1.1"/>
<rect x="271.34" y="399.25" width="1.1" height="1.1"/>
<rect x="271.34" y="409.52" width="1.1" height="1.1"/>
<rect x="271.34" y="419.79" width="1.1" height="1.1"/>
<rect x="271.34" y="430.05" width="1.1" height="1.1"/>
<rect x="271.34" y="440.31" width="1.1" height="1.1"/>
<rect x="271.34" y="450.58" width="1.1" height="1.1"/>
<rect x="271.34" y="460.85" width="1.1" height="1.1"/>
<rect x="271.34" y="471.11" width="1.1" height="1.1"/>
<rect x="271.34" y="481.38" width="1.1" height="1.1"/>
<rect x="271.34" y="491.64" width="1.1" height="1.1"/>
<rect x="271.34" y="501.91" width="1.1" height="1.1"/>
<rect x="271.34" y="512.17" width="1.1" height="1.1"/>
<rect x="271.34" y="522.44" width="1.1" height="1.1"/>
<rect x="271.34" y="532.70" width="1.1" height="1.1"/>
<rect x="271.34" y="542.97" width="1.1" height="1.1"/>
<rect x="281.61" y="19.45" width="1.1" height="1.1"/>
<rect x="281.61" y="29.71" width="1.1" height="1.1"/>
<rect x="281.61" y="39.98" width="1.1" height="1.1"/>
<rect x="281.61" y="50.25" width="1.1" height="1.1"/>
<rect x="281.61" y="60.51" width="1.1" height="1.1"/>
<rect x="281.61" y="70.78" width="1.1" height="1.1"/>
<rect x="281.61" y="81.04" width="1.1" height="1.1"/>
<rect x="281.61" y="91.31" width="1.1" height="1.1"/>
<rect x="281.61" y="101.57" width="1.1" height="1.1"/>
<rect x="281.61" y="111.84" width="1.1" height="1.1"/>
<rect x="281.61" y="122.10" width="1.1" height="1.1"/>
<rect x="281.61" y="132.37" width="1.1" height="1.1"/>
<rect x="281.61" y="142.63" width="1.1" height="1.1"/>
<rect x="281.61" y="152.89" width="1.1" height="1.1"/>
<rect x="281.61" y="163.16" width="1.1" height="1.1"/>
<rect x="281.61" y="173.43" width="1.1" height="1.1"/>
<rect x="281.61" y="183.69" width="1.1" height="1.1"/>
<rect x="281.61" y="193.95" width="1.1" height="1.1"/>
<rect x="281.61" y="204.22" width="1.1" height="1.1"/>
<rect x="281.61" y="214.49" width="1.1" height="1.1"/>
<rect x="281.61" y="224.75" width="1.1" height="1.1"/>
<rect x="281.61" y="235.01" width="1.1" height="1.1"/>
<rect x="281.61" y="245.28" width="1.1" height="1.1"/>
<rect x="281.61" y="255.55" width="1.1" height="1.1"/>
<rect x="281.61" y="265.81" width="1.1" height="1.1"/>
<rect x="281.61" y="276.07" width="1.1" height="1.1"/>
<rect x="281.61" y="286.34" width="1.1" height="1.1"/>
<rect x="281.61" y="296.61" width="1.1" height="1.1"/>
<rect x="281.61" y="306.87" width="1.1" height="1.1"/>
<rect x="281.61" y="317.13" width="1.1" height="1.1"/>
<rect x="281.61" y="327.40" width="1.1" height="1.1"/>
<rect x="281.61" y="337.67" width="1.1" height="1.1"/>
<rect x="281.61" y="347.93" width="1.1" height="1.1"/>
<rect x="281.61" y="358.19" width="1.1" height="1.1"/>
<rect x="281.61" y="368.46" width="1.1" height="1.1"/>
<rect x="281.61" y="378.73" width="1.1" height="1.1"/>
<rect x="281.61" y="388.99" width="1.1" height="1.1"/>
<rect x="281.61" y="399.25" width="1.1" height="1.1"/>
<rect x="281.61" y="409.52" width="1.1" height="1.1"/>
<rect x="281.61" y="419.79" width="1.1" height="1.1"/>
<rect x="281.61" y="430.05" width="1.1" height="1.1"/>
<rect x="281.61" y="440.31" width="1.1" height="1.1"/>
<rect x="281.61" y="450.58" width="1.1" height="1.1"/>
<rect x="281.61" y="460.85" width="1.1" height="1.1"/>
<rect x="281.61" y="471.11" width="1.1" height="1.1"/>
<rect x="281.61" y="481.38" width="1.1" height="1.1"/>
<rect x="281.61" y="491.64" width="1.1" height="1.1"/>
<rect x="281.61" y="501.91" width="1.1" height="1.1"/>
<rect x="281.61" y="512.17" width="1.1" height="1.1"/>
<rect x="281.61" y="522.44" width="1.1" height="1.1"/>
<rect x="281.61" y="532.70" width="1.1" height="1.1"/>
<rect x="281.61" y="542.97" width="1.1" height="1.1"/>
<rect x="291.87" y="19.45" width="1.1" height="1.1"/>
<rect x="291.87" y="29.71" width="1.1" height="1.1"/>
<rect x="291.87" y="39.98" width="1.1" height="1.1"/>
<rect x="291.87" y="50.25" width="1.1" height="1.1"/>
<rect x="291.87" y="60.51" width="1.1" height="1.1"/>
<rect x="291.87" y="70.78" width="1.1" height="1.1"/>
<rect x="291.87" y="81.04" width="1.1" height="1.1"/>
<rect x="291.87" y="91.31" width="1.1" height="1.1"/>
<rect x="291.87" y="101.57" width="1.1" height="1.1"/>
<rect x="291.87" y="111.84" width="1.1" height="1.1"/>
<rect x="291.87" y="122.10" width="1.1" height="1.1"/>
<rect x="291.87" y="132.37" width="1.1" height="1.1"/>
<rect x="291.87" y="142.63" width="1.1" height="1.1"/>
<rect x="291.87" y="152.89" width="1.1" height="1.1"/>
<rect x="291.87" y="163.16" width="1.1" height="1.1"/>
<rect x="291.87" y="173.43" width="1.1" height="1.1"/>
<rect x="291.87" y="183.69" width="1.1" height="1.1"/>
<rect x="291.87" y="193.95" width="1.1" height="1.1"/>
<rect x="291.87" y="204.22" width="1.1" height="1.1"/>
<rect x="291.87" y="214.49" width="1.1" height="1.1"/>
<rect x="291.87" y="224.75" width="1.1" height="1.1"/>
<rect x="291.87" y="235.01" width="1.1" height="1.1"/>
<rect x="291.87" y="245.28" width="1.1" height="1.1"/>
<rect x="291.87" y="255.55" width="1.1" height="1.1"/>
<rect x="291.87" y="265.81" width="1.1" height="1.1"/>
<rect x="291.87" y="276.07" width="1.1" height="1.1"/>
<rect x="291.87" y="286.34" width="1.1" height="1.1"/>
<rect x="291.87" y="296.61" width="1.1" height="1.1"/>
<rect x="291.87" y="306.87" width="1.1" height="1.1"/>
<rect x="291.87" y="317.13" width="1.1" height="1.1"/>
<rect x="291.87" y="327.40" width="1.1" height="1.1"/>
<rect x="291.87" y="337.67" width="1.1" height="1.1"/>
<rect x="291.87" y="347.93" width="1.1" height="1.1"/>
<rect x="291.87" y="358.19" width="1.1" height="1.1"/>
<rect x="291.87" y="368.46" width="1.1" height="1.1"/>
<rect x="291.87" y="378.73" width="1.1" height="1.1"/>
<rect x="291.87" y="388.99" width="1.1" height="1.1"/>
<rect x="291.87" y="399.25" width="1.1" height="1.1"/>
<rect x="291.87" y="409.52" width="1.1" height="1.1"/>
<rect x="291.87" y="419.79" width="1.1" height="1.1"/>
<rect x="291.87" y="430.05" width="1.1" height="1.1"/>
<rect x="291.87" y="440.31" width="1.1" height="1.1"/>
<rect x="291.87" y="450.58" width="1.1" height="1.1"/>
<rect x="291.87" y="460.85" width="1.1" height="1.1"/>
<rect x="291.87" y="471.11" width="1.1" height="1.1"/>
<rect x="291.87" y="481.38" width="1.1" height="1.1"/>
<rect x="291.87" y="491.64" width="1.1" height="1.1"/>
<rect x="291.87" y="501.91" width="1.1" height="1.1"/>
<rect x="291.87" y="512.17" width="1.1" height="1.1"/>
<rect x="291.87" y="522.44" width="1.1" height="1.1"/>
<rect x="291.87" y="532.70" width="1.1" height="1.1"/>
<rect x="291.87" y="542.97" width="1.1" height="1.1"/>
<rect x="302.13" y="19.45" width="1.1" height="1.1"/>
<rect x="302.13" y="29.71" width="1.1" height="1.1"/>
<rect x="302.13" y="39.98" width="1.1" height="1.1"/>
<rect x="302.13" y="50.25" width="1.1" height="1.1"/>
<rect x="302.13" y="60.51" width="1.1" height="1.1"/>
<rect x="302.13" y="70.78" width="1.1" height="1.1"/>
<rect x="302.13" y="81.04" width="1.1" height="1.1"/>
<rect x="302.13" y="91.31" width="1.1" height="1.1"/>
<rect x="302.13" y="101.57" width="1.1" height="1.1"/>
<rect x="302.13" y="111.84" width="1.1" height="1.1"/>
<rect x="302.13" y="122.10" width="1.1" height="1.1"/>
<rect x="302.13" y="132.37" width="1.1" height="1.1"/>
<rect x="302.13" y="142.63" width="1.1" height="1.1"/>
<rect x="302.13" y="152.89" width="1.1" height="1.1"/>
<rect x="302.13" y="163.16" width="1.1" height="1.1"/>
<rect x="302.13" y="173.43" width="1.1" height="1.1"/>
<rect x="302.13" y="183.69" width="1.1" height="1.1"/>
<rect x="302.13" y="193.95" width="1.1" height="1.1"/>
<rect x="302.13" y="204.22" width="1.1" height="1.1"/>
<rect x="302.13" y="214.49" width="1.1" height="1.1"/>
<rect x="302.13" y="224.75" width="1.1" height="1.1"/>
<rect x="302.13" y="235.01" width="1.1" height="1.1"/>
<rect x="302.13" y="245.28" width="1.1" height="1.1"/>
<rect x="302.13" y="255.55" width="1.1" height="1.1"/>
<rect x="302.13" y="265.81" width="1.1" height="1.1"/>
<rect x="302.13" y="276.07" width="1.1" height="1.1"/>
<rect x="302.13" y="286.34" width="1.1" height="1.1"/>
<rect x="302.13" y="296.61" width="1.1" height="1.1"/>
<rect x="302.13" y="306.87" width="1.1" height="1.1"/>
<rect x="302.13" y="317.13" width="1.1" height="1.1"/>
<rect x="302.13" y="327.40" width="1.1" height="1.1"/>
<rect x="302.13" y="337.67" width="1.1" height="1.1"/>
<rect x="302.13" y="347.93" width="1.1" height="1.1"/>
<rect x="302.13" y="358.19" width="1.1" height="1.1"/>
<rect x="302.13" y="368.46" width="1.1" height="1.1"/>
<rect x="302.13" y="378.73" width="1.1" height="1.1"/>
<rect x="302.13" y="388.99" width="1.1" height="1.1"/>
<rect x="302.13" y="399.25" width="1.1" height="1.1"/>
<rect x="302.13" y="409.52" width="1.1" height="1.1"/>
<rect x="302.13" y="419.79" width="1.1" height="1.1"/>
<rect x="302.13" y="430.05" width="1.1" height="1.1"/>
<rect x="302.13" y="440.31" width="1.1" height="1.1"/>
<rect x="302.13" y="450.58" width="1.1" height="1.1"/>
<rect x="302.13" y="460.85" width="1.1" height="1.1"/>
<rect x="302.13" y="471.11" width="1.1" height="1.1"/>
<rect x="302.13" y="481.38" width="1.1" height="1.1"/>
<rect x="302.13" y="491.64" width="1.1" height="1.1"/>
<rect x="302.13" y="501.91" width="1.1" height="1.1"/>
<rect x="302.13" y="512.17" width="1.1" height="1.1"/>
<rect x="302.13" y="522.44" width="1.1" height="1.1"/>
<rect x="302.13" y="532.70" width="1.1" height="1.1"/>
<rect x="302.13" y="542.97" width="1.1" height="1.1"/>
<rect x="312.40" y="19.45" width="1.1" height="1.1"/>
<rect x="312.40" y="29.71" width="1.1" height="1.1"/>
<rect x="312.40" y="39.98" width="1.1" height="1.1"/>
<rect x="312.40" y="50.25" width="1.1" height="1.1"/>
<rect x="312.40" y="60.51" width="1.1" height="1.1"/>
<rect x="312.40" y="70.78" width="1.1" height="1.1"/>
<rect x="312.40" y="81.04" width="1.1" height="1.1"/>
<rect x="312.40" y="91.31" width="1.1" height="1.1"/>
<rect x="312.40" y="101.57" width="1.1" height="1.1"/>
<rect x="312.40" y="111.84" width="1.1" height="1.1"/>
<rect x="312.40" y="122.10" width="1.1" height="1.1"/>
<rect x="312.40" y="132.37" width="1.1" height="1.1"/>
<rect x="312.40" y="142.63" width="1.1" height="1.1"/>
<rect x="312.40" y="152.89" width="1.1" height="1.1"/>
<rect x="312.40" y="163.16" width="1.1" height="1.1"/>
<rect x="312.40" y="173.43" width="1.1" height="1.1"/>
<rect x="312.40" y="183.69" width="1.1" height="1.1"/>
<rect x="312.40" y="193.95" width="1.1" height="1.1"/>
<rect x="312.40" y="204.22" width="1.1" height="1.1"/>
<rect x="312.40" y="214.49" width="1.1" height="1.1"/>
<rect x="312.40" y="224.75" width="1.1" height="1.1"/>
<rect x="312.40" y="235.01" width="1.1" height="1.1"/>
<rect x="312.40" y="245.28" width="1.1" height="1.1"/>
<rect x="312.40" y="255.55" width="1.1" height="1.1"/>
<rect x="312.40" y="265.81" width="1.1" height="1.1"/>
<rect x="312.40" y="276.07" width="1.1" height="1.1"/>
<rect x="312.40" y="286.34" width="1.1" height="1.1"/>
<rect x="312.40" y="296.61" width="1.1" height="1.1"/>
<rect x="312.40" y="306.87" width="1.1" height="1.1"/>
<rect x="312.40" y="317.13" width="1.1" height="1.1"/>
<rect x="312.40" y="327.40" width="1.1" height="1.1"/>
<rect x="312.40" y="337.67" width="1.1" height="1.1"/>
<rect x="312.40" y="347.93" width="1.1" height="1.1"/>
<rect x="312.40" y="358.19" width="1.1" height="1.1"/>
<rect x="312.40" y="368.46" width="1.1" height="1.1"/>
<rect x="312.40" y="378.73" width="1.1" height="1.1"/>
<rect x="312.40" y="388.99" width="1.1" height="1.1"/>
<rect x="312.40" y="399.25" width="1.1" height="1.1"/>
<rect x="312.40" y="409.52" width="1.1" height="1.1"/>
<rect x="312.40" y="419.79" width="1.1" height="1.1"/>
<rect x="312.40" y="430.05" width="1.1" height="1.1"/>
<rect x="312.40" y="440.31" width="1.1" height="1.1"/>
<rect x="312.40" y="450.58" width="1.1" height="1.1"/>
<rect x="312.40" y="460.85" width="1.1" height="1.1"/>
<rect x="312.40" y="471.11" width="1.1" height="1.1"/>
<rect x="312.40" y="481.38" width="1.1" height="1.1"/>
<rect x="312.40" y="491.64" width="1.1" height="1.1"/>
<rect x="312.40" y="501.91" width="1.1" height="1.1"/>
<rect x="312.40" y="512.17" width="1.1" height="1.1"/>
<rect x="312.40" y="522.44" width="1.1" height="1.1"/>
<rect x="312.40" y="532.70" width="1.1" height="1.1"/>
<rect x="312.40" y="542.97" width="1.1" height="1.1"/>
<rect x="322.67" y="19.45" width="1.1" height="1.1"/>
<rect x="322.67" y="29.71" width="1.1" height="1.1"/>
<rect x="322.67" y="39.98" width="1.1" height="1.1"/>
<rect x="322.67" y="50.25" width="1.1" height="1.1"/>
<rect x="322.67" y="60.51" width="1.1" height="1.1"/>
<rect x="322.67" y="70.78" width="1.1" height="1.1"/>
<rect x="322.67" y="81.04" width="1.1" height="1.1"/>
<rect x="322.67" y="91.31" width="1.1" height="1.1"/>
<rect x="322.67" y="101.57" width="1.1" height="1.1"/>
<rect x="322.67" y="111.84" width="1.1" height="1.1"/>
<rect x="322.67" y="122.10" width="1.1" height="1.1"/>
<rect x="322.67" y="132.37" width="1.1" height="1.1"/>
<rect x="322.67" y="142.63" width="1.1" height="1.1"/>
<rect x="322.67" y="152.89" width="1.1" height="1.1"/>
<rect x="322.67" y="163.16" width="1.1" height="1.1"/>
<rect x="322.67" y="173.43" width="1.1" height="1.1"/>
<rect x="322.67" y="183.69" width="1.1" height="1.1"/>
<rect x="322.67" y="193.95" width="1.1" height="1.1"/>
<rect x="322.67" y="204.22" width="1.1" height="1.1"/>
<rect x="322.67" y="214.49" width="1.1" height="1.1"/>
<rect x="322.67" y="224.75" width="1.1" height="1.1"/>
<rect x="322.67" y="235.01" width="1.1" height="1.1"/>
<rect x="322.67" y="245.28" width="1.1" height="1.1"/>
<rect x="322.67" y="255.55" width="1.1" height="1.1"/>
<rect x="322.67" y="265.81" width="1.1" height="1.1"/>
<rect x="322.67" y="276.07" width="1.1" height="1.1"/>
<rect x="322.67" y="286.34" width="1.1" height="1.1"/>
<rect x="322.67" y="296.61" width="1.1" height="1.1"/>
<rect x="322.67" y="306.87" width="1.1" height="1.1"/>
<rect x="322.67" y="317.13" width="1.1" height="1.1"/>
<rect x="322.67" y="327.40" width="1.1" height="1.1"/>
<rect x="322.67" y="337.67" width="1.1" height="1.1"/>
<rect x="322.67" y="347.93" width="1.1" height="1.1"/>
<rect x="322.67" y="358.19" width="1.1" height="1.1"/>
<rect x="322.67" y="368.46" width="1.1" height="1.1"/>
<rect x="322.67" y="378.73" width="1.1" height="1.1"/>
<rect x="322.67" y="388.99" width="1.1" height="1.1"/>
<rect x="322.67" y="399.25" width="1.1" height="1.1"/>
<rect x="322.67" y="409.52" width="1.1" height="1.1"/>
<rect x="322.67" y="419.79" width="1.1" height="1.1"/>
<rect x="322.67" y="430.05" width="1.1" height="1.1"/>
<rect x="322.67" y="440.31" width="1.1" height="1.1"/>
<rect x="322.67" y="450.58" width="1.1" height="1.1"/>
<rect x="322.67" y="460.85" width="1.1" height="1.1"/>
<rect x="322.67" y="471.11" width="1.1" height="1.1"/>
<rect x="322.67" y="481.38" width="1.1" height="1.1"/>
<rect x="322.67" y="491.64" width="1.1" height="1.1"/>
<rect x="322.67" y="501.91" width="1.1" height="1.1"/>
<rect x="322.67" y="512.17" width="1.1" height="1.1"/>
<rect x="322.67" y="522.44" width="1.1" height="1.1"/>
<rect x="322.67" y="532.70" width="1.1" height="1.1"/>
<rect x="322.67" y="542.97" width="1.1" height="1.1"/>
<rect x="332.93" y="19.45" width="1.1" height="1.1"/>
<rect x="332.93" y="29.71" width="1.1" height="1.1"/>
<rect x="332.93" y="39.98" width="1.1" height="1.1"/>
<rect x="332.93" y="50.25" width="1.1" height="1.1"/>
<rect x="332.93" y="60.51" width="1.1" height="1.1"/>
<rect x="332.93" y="70.78" width="1.1" height="1.1"/>
<rect x="332.93" y="81.04" width="1.1" height="1.1"/>
<rect x="332.93" y="91.31" width="1.1" height="1.1"/>
<rect x="332.93" y="101.57" width="1.1" height="1.1"/>
<rect x="332.93" y="111.84" width="1.1" height="1.1"/>
<rect x="332.93" y="122.10" width="1.1" height="1.1"/>
<rect x="332.93" y="132.37" width="1.1" height="1.1"/>
<rect x="332.93" y="142.63" width="1.1" height="1.1"/>
<rect x="332.93" y="152.89" width="1.1" height="1.1"/>
<rect x="332.93" y="163.16" width="1.1" height="1.1"/>
<rect x="332.93" y="173.43" width="1.1" height="1.1"/>
<rect x="332.93" y="183.69" width="1.1" height="1.1"/>
<rect x="332.93" y="193.95" width="1.1" height="1.1"/>
<rect x="332.93" y="204.22" width="1.1" height="1.1"/>
<rect x="332.93" y="214.49" width="1.1" height="1.1"/>
<rect x="332.93" y="224.75" width="1.1" height="1.1"/>
<rect x="332.93" y="235.01" width="1.1" height="1.1"/>
<rect x="332.93" y="245.28" width="1.1" height="1.1"/>
<rect x="332.93" y="255.55" width="1.1" height="1.1"/>
<rect x="332.93" y="265.81" width="1.1" height="1.1"/>
<rect x="332.93" y="276.07" width="1.1" height="1.1"/>
<rect x="332.93" y="286.34" width="1.1" height="1.1"/>
<rect x="332.93" y="296.61" width="1.1" height="1.1"/>
<rect x="332.93" y="306.87" width="1.1" height="1.1"/>
<rect x="332.93" y="317.13" width="1.1" height="1.1"/>
<rect x="332.93" y="327.40" width="1.1" height="1.1"/>
<rect x="332.93" y="337.67" width="1.1" height="1.1"/>
<rect x="332.93" y="347.93" width="1.1" height="1.1"/>
<rect x="332.93" y="358.19" width="1.1" height="1.1"/>
<rect x="332.93" y="368.46" width="1.1" height="1.1"/>
<rect x="332.93" y="378.73" width="1.1" height="1.1"/>
<rect x="332.93" y="388.99" width="1.1" height="1.1"/>
<rect x="332.93" y="399.25" width="1.1" height="1.1"/>
<rect x="332.93" y="409.52" width="1.1" height="1.1"/>
<rect x="332.93" y="419.79" width="1.1" height="1.1"/>
<rect x="332.93" y="430.05" width="1.1" height="1.1"/>
<rect x="332.93" y="440.31" width="1.1" height="1.1"/>
<rect x="332.93" y="450.58" width="1.1" height="1.1"/>
<rect x="332.93" y="460.85" width="1.1" height="1.1"/>
<rect x="332.93" y="471.11" width="1.1" height="1.1"/>
<rect x="332.93" y="481.38" width="1.1" height="1.1"/>
<rect x="332.93" y="491.64" width="1.1" height="1.1"/>
<rect x="332.93" y="501.91" width="1.1" height="1.1"/>
<rect x="332.93" y="512.17" width="1.1" height="1.1"/>
<rect x="332.93" y="522.44" width="1.1" height="1.1"/>
<rect x="332.93" y="532.70" width="1.1" height="1.1"/>
<rect x="332.93" y="542.97" width="1.1" height="1.1"/>
<rect x="343.19" y="19.45" width="1.1" height="1.1"/>
<rect x="343.19" y="29.71" width="1.1" height="1.1"/>
<rect x="343.19" y="39.98" width="1.1" height="1.1"/>
<rect x="343.19" y="50.25" width="1.1" height="1.1"/>
<rect x="343.19" y="60.51" width="1.1" height="1.1"/>
<rect x="343.19" y="70.78" width="1.1" height="1.1"/>
<rect x="343.19" y="81.04" width="1.1" height="1.1"/>
<rect x="343.19" y="91.31" width="1.1" height="1.1"/>
<rect x="343.19" y="101.57" width="1.1" height="1.1"/>
<rect x="343.19" y="111.84" width="1.1" height="1.1"/>
<rect x="343.19" y="122.10" width="1.1" height="1.1"/>
<rect x="343.19" y="132.37" width="1.1" height="1.1"/>
<rect x="343.19" y="142.63" width="1.1" height="1.1"/>
<rect x="343.19" y="152.89" width="1.1" height="1.1"/>
<rect x="343.19" y="163.16" width="1.1" height="1.1"/>
<rect x="343.19" y="173.43" width="1.1" height="1.1"/>
<rect x="343.19" y="183.69" width="1.1" height="1.1"/>
<rect x="343.19" y="193.95" width="1.1" height="1.1"/>
<rect x="343.19" y="204.22" width="1.1" height="1.1"/>
<rect x="343.19" y="214.49" width="1.1" height="1.1"/>
<rect x="343.19" y="224.75" width="1.1" height="1.1"/>
<rect x="343.19" y="235.01" width="1.1" height="1.1"/>
<rect x="343.19" y="245.28" width="1.1" height="1.1"/>
<rect x="343.19" y="255.55" width="1.1" height="1.1"/>
<rect x="343.19" y="265.81" width="1.1" height="1.1"/>
<rect x="343.19" y="276.07" width="1.1" height="1.1"/>
<rect x="343.19" y="286.34" width="1.1" height="1.1"/>
<rect x="343.19" y="296.61" width="1.1" height="1.1"/>
<rect x="343.19" y="306.87" width="1.1" height="1.1"/>
<rect x="343.19" y="317.13" width="1.1" height="1.1"/>
<rect x="343.19" y="327.40" width="1.1" height="1.1"/>
<rect x="343.19" y="337.67" width="1.1" height="1.1"/>
<rect x="343.19" y="347.93" width="1.1" height="1.1"/>
<rect x="343.19" y="358.19" width="1.1" height="1.1"/>
<rect x="343.19" y="368.46" width="1.1" height="1.1"/>
<rect x="343.19" y="378.73" width="1.1" height="1.1"/>
<rect x="343.19" y="388.99" width="1.1" height="1.1"/>
<rect x="343.19" y="399.25" width="1.1" height="1.1"/>
<rect x="343.19" y="409.52" width="1.1" height="1.1"/>
<rect x="343.19" y="419.79" width="1.1" height="1.1"/>
<rect x="343.19" y="430.05" width="1.1" height="1.1"/>
<rect x="343.19" y="440.31" width="1.1" height="1.1"/>
<rect x="343.19" y="450.58" width="1.1" height="1.1"/>
<rect x="343.19" y="460.85" width="1.1" height="1.1"/>
<rect x="343.19" y="471.11" width="1.1" height="1.1"/>
<rect x="343.19" y="481.38" width="1.1" height="1.1"/>
<rect x="343.19" y="491.64" width="1.1" height="1.1"/>
<rect x="343.19" y="501.91" width="1.1" height="1.1"/>
<rect x="343.19" y="512.17" width="1.1" height="1.1"/>
<rect x="343.19" y="522.44" width="1.1" height="1.1"/>
<rect x="343.19" y="532.70" width="1.1" height="1.1"/>
<rect x="343.19" y="542.97" width="1.1" height="1.1"/>
<rect x="353.46" y="19.45" width="1.1" height="1.1"/>
<rect x="353.46" y="29.71" width="1.1" height="1.1"/>
<rect x="353.46" y="39.98" width="1.1" height="1.1"/>
<rect x="353.46" y="50.25" width="1.1" height="1.1"/>
<rect x="353.46" y="60.51" width="1.1" height="1.1"/>
<rect x="353.46" y="70.78" width="1.1" height="1.1"/>
<rect x="353.46" y="81.04" width="1.1" height="1.1"/>
<rect x="353.46" y="91.31" width="1.1" height="1.1"/>
<rect x="353.46" y="101.57" width="1.1" height="1.1"/>
<rect x="353.46" y="111.84" width="1.1" height="1.1"/>
<rect x="353.46" y="122.10" width="1.1" height="1.1"/>
<rect x="353.46" y="132.37" width="1.1" height="1.1"/>
<rect x="353.46" y="142.63" width="1.1" height="1.1"/>
<rect x="353.46" y="152.89" width="1.1" height="1.1"/>
<rect x="353.46" y="163.16" width="1.1" height="1.1"/>
<rect x="353.46" y="173.43" width="1.1" height="1.1"/>
<rect x="353.46" y="183.69" width="1.1" height="1.1"/>
<rect x="353.46" y="193.95" width="1.1" height="1.1"/>
<rect x="353.46" y="204.22" width="1.1" height="1.1"/>
<rect x="353.46" y="214.49" width="1.1" height="1.1"/>
<rect x="353.46" y="224.75" width="1.1" height="1.1"/>
<rect x="353.46" y="235.01" width="1.1" height="1.1"/>
<rect x="353.46" y="245.28" width="1.1" height="1.1"/>
<rect x="353.46" y="255.55" width="1.1" height="1.1"/>
<rect x="353.46" y="265.81" width="1.1" height="1.1"/>
<rect x="353.46" y="276.07" width="1.1" height="1.1"/>
<rect x="353.46" y="286.34" width="1.1" height="1.1"/>
<rect x="353.46" y="296.61" width="1.1" height="1.1"/>
<rect x="353.46" y="306.87" width="1.1" height="1.1"/>
<rect x="353.46" y="317.13" width="1.1" height="1.1"/>
<rect x="353.46" y="327.40" width="1.1" height="1.1"/>
<rect x="353.46" y="337.67" width="1.1" height="1.1"/>
<rect x="353.46" y="347.93" width="1.1" height="1.1"/>
<rect x="353.46" y="358.19" width="1.1" height="1.1"/>
<rect x="353.46" y="368.46" width="1.1" height="1.1"/>
<rect x="353.46" y="378.73" width="1.1" height="1.1"/>
<rect x="353.46" y="388.99" width="1.1" height="1.1"/>
<rect x="353.46" y="399.25" width="1.1" height="1.1"/>
<rect x="353.46" y="409.52" width="1.1" height="1.1"/>
<rect x="353.46" y="419.79" width="1.1" height="1.1"/>
<rect x="353.46" y="430.05" width="1.1" height="1.1"/>
<rect x="353.46" y="440.31" width="1.1" height="1.1"/>
<rect x="353.46" y="450.58" width="1.1" height="1.1"/>
<rect x="353.46" y="460.85" width="1.1" height="1.1"/>
<rect x="353.46" y="471.11" width="1.1" height="1.1"/>
<rect x="353.46" y="481.38" width="1.1" height="1.1"/>
<rect x="353.46" y="491.64" width="1.1" height="1.1"/>
<rect x="353.46" y="501.91" width="1.1" height="1.1"/>
<rect x="353.46" y="512.17" width="1.1" height="1.1"/>
<rect x="353.46" y="522.44" width="1.1" height="1.1"/>
<rect x="353.46" y="532.70" width="1.1" height="1.1"/>
<rect x="353.46" y="542.97" width="1.1" height="1.1"/>
<rect x="363.73" y="19.45" width="1.1" height="1.1"/>
<rect x="363.73" y="29.71" width="1.1" height="1.1"/>
<rect x="363.73" y="39.98" width="1.1" height="1.1"/>
<rect x="363.73" y="50.25" width="1.1" height="1.1"/>
<rect x="363.73" y="60.51" width="1.1" height="1.1"/>
<rect x="363.73" y="70.78" width="1.1" height="1.1"/>
<rect x="363.73" y="81.04" width="1.1" height="1.1"/>
<rect x="363.73" y="91.31" width="1.1" height="1.1"/>
<rect x="363.73" y="101.57" width="1.1" height="1.1"/>
<rect x="363.73" y="111.84" width="1.1" height="1.1"/>
<rect x="363.73" y="122.10" width="1.1" height="1.1"/>
<rect x="363.73" y="132.37" width="1.1" height="1.1"/>
<rect x="363.73" y="142.63" width="1.1" height="1.1"/>
<rect x="363.73" y="152.89" width="1.1" height="1.1"/>
<rect x="363.73" y="163.16" width="1.1" height="1.1"/>
<rect x="363.73" y="173.43" width="1.1" height="1.1"/>
<rect x="363.73" y="183.69" width="1.1" height="1.1"/>
<rect x="363.73" y="193.95" width="1.1" height="1.1"/>
<rect x="363.73" y="204.22" width="1.1" height="1.1"/>
<rect x="363.73" y="214.49" width="1.1" height="1.1"/>
<rect x="363.73" y="224.75" width="1.1" height="1.1"/>
<rect x="363.73" y="235.01" width="1.1" height="1.1"/>
<rect x="363.73" y="245.28" width="1.1" height="1.1"/>
<rect x="363.73" y="255.55" width="1.1" height="1.1"/>
<rect x="363.73" y="265.81" width="1.1" height="1.1"/>
<rect x="363.73" y="276.07" width="1.1" height="1.1"/>
<rect x="363.73" y="286.34" width="1.1" height="1.1"/>
<rect x="363.73" y="296.61" width="1.1" height="1.1"/>
<rect x="363.73" y="306.87" width="1.1" height="1.1"/>
<rect x="363.73" y="317.13" width="1.1" height="1.1"/>
<rect x="363.73" y="327.40" width="1.1" height="1.1"/>
<rect x="363.73" y="337.67" width="1.1" height="1.1"/>
<rect x="363.73" y="347.93" width="1.1" height="1.1"/>
<rect x="363.73" y="358.19" width="1.1" height="1.1"/>
<rect x="363.73" y="368.46" width="1.1" height="1.1"/>
<rect x="363.73" y="378.73" width="1.1" height="1.1"/>
<rect x="363.73" y="388.99" width="1.1" height="1.1"/>
<rect x="363.73" y="399.25" width="1.1" height="1.1"/>
<rect x="363.73" y="409.52" width="1.1" height="1.1"/>
<rect x="363.73" y="419.79" width="1.1" height="1.1"/>
<rect x="363.73" y="430.05" width="1.1" height="1.1"/>
<rect x="363.73" y="440.31" width="1.1" height="1.1"/>
<rect x="363.73" y="450.58" width="1.1" height="1.1"/>
<rect x="363.73" y="460.85" width="1.1" height="1.1"/>
<rect x="363.73" y="471.11" width="1.1" height="1.1"/>
<rect x="363.73" y="481.38" width="1.1" height="1.1"/>
<rect x="363.73" y="491.64" width="1.1" height="1.1"/>
<rect x="363.73" y="501.91" width="1.1" height="1.1"/>
<rect x="363.73" y="512.17" width="1.1" height="1.1"/>
<rect x="363.73" y="522.44" width="1.1" height="1.1"/>
<rect x="363.73" y="532.70" width="1.1" height="1.1"/>
<rect x="363.73" y="542.97" width="1.1" height="1.1"/>
<rect x="373.99" y="19.45" width="1.1" height="1.1"/>
<rect x="373.99" y="29.71" width="1.1" height="1.1"/>
<rect x="373.99" y="39.98" width="1.1" height="1.1"/>
<rect x="373.99" y="50.25" width="1.1" height="1.1"/>
<rect x="373.99" y="60.51" width="1.1" height="1.1"/>
<rect x="373.99" y="70.78" width="1.1" height="1.1"/>
<rect x="373.99" y="81.04" width="1.1" height="1.1"/>
<rect x="373.99" y="91.31" width="1.1" height="1.1"/>
<rect x="373.99" y="101.57" width="1.1" height="1.1"/>
<rect x="373.99" y="111.84" width="1.1" height="1.1"/>
<rect x="373.99" y="122.10" width="1.1" height="1.1"/>
<rect x="373.99" y="132.37" width="1.1" height="1.1"/>
<rect x="373.99" y="142.63" width="1.1" height="1.1"/>
<rect x="373.99" y="152.89" width="1.1" height="1.1"/>
<rect x="373.99" y="163.16" width="1.1" height="1.1"/>
<rect x="373.99" y="173.43" width="1.1" height="1.1"/>
<rect x="373.99" y="183.69" width="1.1" height="1.1"/>
<rect x="373.99" y="193.95" width="1.1" height="1.1"/>
<rect x="373.99" y="204.22" width="1.1" height="1.1"/>
<rect x="373.99" y="214.49" width="1.1" height="1.1"/>
<rect x="373.99" y="224.75" width="1.1" height="1.1"/>
<rect x="373.99" y="235.01" width="1.1" height="1.1"/>
<rect x="373.99" y="245.28" width="1.1" height="1.1"/>
<rect x="373.99" y="255.55" width="1.1" height="1.1"/>
<rect x="373.99" y="265.81" width="1.1" height="1.1"/>
<rect x="373.99" y="276.07" width="1.1" height="1.1"/>
<rect x="373.99" y="286.34" width="1.1" height="1.1"/>
<rect x="373.99" y="296.61" width="1.1" height="1.1"/>
<rect x="373.99" y="306.87" width="1.1" height="1.1"/>
<rect x="373.99" y="317.13" width="1.1" height="1.1"/>
<rect x="373.99" y="327.40" width="1.1" height="1.1"/>
<rect x="373.99" y="337.67" width="1.1" height="1.1"/>
<rect x="373.99" y="347.93" width="1.1" height="1.1"/>
<rect x="373.99" y="358.19" width="1.1" height="1.1"/>
<rect x="373.99" y="368.46" width="1.1" height="1.1"/>
<rect x="373.99" y="378.73" width="1.1" height="1.1"/>
<rect x="373.99" y="388.99" width="1.1" height="1.1"/>
<rect x="373.99" y="399.25" width="1.1" height="1.1"/>
<rect x="373.99" y="409.52" width="1.1" height="1.1"/>
<rect x="373.99" y="419.79" width="1.1" height="1.1"/>
<rect x="373.99" y="430.05" width="1.1" height="1.1"/>
<rect x="373.99" y="440.31" width="1.1" height="1.1"/>
<rect x="373.99" y="450.58" width="1.1" height="1.1"/>
<rect x="373.99" y="460.85" width="1.1" height="1.1"/>
<rect x="373.99" y="471.11" width="1.1" height="1.1"/>
<rect x="373.99" y="481.38" width="1.1" height="1.1"/>
<rect x="373.99" y="491.64" width="1.1" height="1.1"/>
<rect x="373.99" y="501.91" width="1.1" height="1.1"/>
<rect x="373.99" y="512.17" width="1.1" height="1.1"/>
<rect x="373.99" y="522.44" width="1.1" height="1.1"/>
<rect x="373.99" y="532.70" width="1.1" height="1.1"/>
<rect x="373.99" y="542.97" width="1.1" height="1.1"/>
<rect x="384.25" y="19.45" width="1.1" height="1.1"/>
<rect x="384.25" y="29.71" width="1.1" height="1.1"/>
<rect x="384.25" y="39.98" width="1.1" height="1.1"/>
<rect x="384.25" y="50.25" width="1.1" height="1.1"/>
<rect x="384.25" y="60.51" width="1.1" height="1.1"/>
<rect x="384.25" y="70.78" width="1.1" height="1.1"/>
<rect x="384.25" y="81.04" width="1.1" height="1.1"/>
<rect x="384.25" y="91.31" width="1.1" height="1.1"/>
<rect x="384.25" y="101.57" width="1.1" height="1.1"/>
<rect x="384.25" y="111.84" width="1.1" height="1.1"/>
<rect x="384.25" y="122.10" width="1.1" height="1.1"/>
<rect x="384.25" y="132.37" width="1.1" height="1.1"/>
<rect x="384.25" y="142.63" width="1.1" height="1.1"/>
<rect x="384.25" y="152.89" width="1.1" height="1.1"/>
<rect x="384.25" y="163.16" width="1.1" height="1.1"/>
<rect x="384.25" y="173.43" width="1.1" height="1.1"/>
<rect x="384.25" y="183.69" width="1.1" height="1.1"/>
<rect x="384.25" y="193.95" width="1.1" height="1.1"/>
<rect x="384.25" y="204.22" width="1.1" height="1.1"/>
<rect x="384.25" y="214.49" width="1.1" height="1.1"/>
<rect x="384.25" y="224.75" width="1.1" height="1.1"/>
<rect x="384.25" y="235.01" width="1.1" height="1.1"/>
<rect x="384.25" y="245.28" width="1.1" height="1.1"/>
<rect x="384.25" y="255.55" width="1.1" height="1.1"/>
<rect x="384.25" y="265.81" width="1.1" height="1.1"/>
<rect x="384.25" y="276.07" width="1.1" height="1.1"/>
<rect x="384.25" y="286.34" width="1.1" height="1.1"/>
<rect x="384.25" y="296.61" width="1.1" height="1.1"/>
<rect x="384.25" y="306.87" width="1.1" height="1.1"/>
<rect x="384.25" y="317.13" width="1.1" height="1.1"/>
<rect x="384.25" y="327.40" width="1.1" height="1.1"/>
<rect x="384.25" y="337.67" width="1.1" height="1.1"/>
<rect x="384.25" y="347.93" width="1.1" height="1.1"/>
<rect x="384.25" y="358.19" width="1.1" height="1.1"/>
<rect x="384.25" y="368.46" width="1.1" height="1.1"/>
<rect x="384.25" y="378.73" width="1.1" height="1.1"/>
<rect x="384.25" y="388.99" width="1.1" height="1.1"/>
<rect x="384.25" y="399.25" width="1.1" height="1.1"/>
<rect x="384.25" y="409.52" width="1.1" height="1.1"/>
<rect x="384.25" y="419.79" width="1.1" height="1.1"/>
<rect x="384.25" y="430.05" width="1.1" height="1.1"/>
<rect x="384.25" y="440.31" width="1.1" height="1.1"/>
<rect x="384.25" y="450.58" width="1.1" height="1.1"/>
<rect x="384.25" y="460.85" width="1.1" height="1.1"/>
<rect x="384.25" y="471.11" width="1.1" height="1.1"/>
<rect x="384.25" y="481.38" width="1.1" height="1.1"/>
<rect x="384.25" y="491.64" width="1.1" height="1.1"/>
<rect x="384.25" y="501.91" width="1.1" height="1.1"/>
<rect x="384.25" y="512.17" width="1.1" height="1.1"/>
<rect x="384.25" y="522.44" width="1.1" height="1.1"/>
<rect x="384.25" y="532.70" width="1.1" height="1.1"/>
<rect x="384.25" y="542.97" width="1.1" height="1.1"/>
</g>
<g style='font-family:"Liberation Sans", sans-serif'>
<polygon points="56.90,148.35 56.90,158.85 51.20,153.60" stroke="#6a6aa8" stroke-width="1" fill="none"/>
<line x1="56.90" y1="153.60" x2="64.00" y2="153.60" stroke="#6e62b4" stroke-width="1.0"/>
<rect x="64.00" y="150.20" width="21.40" height="6.80" stroke="#6a6aa8" stroke-width="1.0" fill="none"/>
<line x1="85.40" y1="153.60" x2="110.30" y2="153.60" stroke="#6e62b4" stroke-width="1.0"/>
<rect x="110.30" y="150.20" width="21.20" height="6.80" stroke="#6a6aa8" stroke-width="1.0" fill="none"/>
<line x1="131.50" y1="153.60" x2="166.80" y2="153.60" stroke="#6e62b4" stroke-width="1.0"/>
<rect x="166.80" y="150.20" width="20.90" height="6.80" stroke="#6a6aa8" stroke-width="1.0" fill="none"/>
<line x1="187.70" y1="153.60" x2="197.40" y2="153.60" stroke="#6e62b4" stroke-width="1.0"/>
<polygon points="194.80,152.00 198.20,153.60 194.80,155.20" fill="#111"/>
<line x1="193.40" y1="153.60" x2="197.40" y2="153.60" stroke="#111" stroke-width="1.0"/>
<circle cx="97.50" cy="153.60" r="1.85" fill="#0000c8"/>
<circle cx="143.60" cy="153.60" r="1.85" fill="#0000c8"/>
<line x1="143.60" y1="153.60" x2="143.60" y2="167.70" stroke="#6e62b4" stroke-width="1.0"/>
<line x1="138.70" y1="167.70" x2="149.20" y2="167.70" stroke="#585890" stroke-width="1.1"/>
<line x1="138.70" y1="170.10" x2="149.20" y2="170.10" stroke="#585890" stroke-width="1.1"/>
<line x1="143.60" y1="170.10" x2="143.60" y2="179.80" stroke="#6e62b4" stroke-width="1.0"/>
<polygon points="138.15,179.80 148.65,179.80 143.40,185.40" stroke="#6a6aa8" stroke-width="1" fill="none"/>
<text x="74.50" y="148.30" font-size="8.6" fill="#1a1a1a" stroke="#1a1a1a" stroke-width="0.3" text-anchor="middle" textLength="9.20" lengthAdjust="spacingAndGlyphs" xml:space="preserve">R8</text>
<text x="74.50" y="164.40" font-size="8.6" fill="#1a1a1a" stroke="#1a1a1a" stroke-width="0.3" text-anchor="middle" textLength="15.50" lengthAdjust="spacingAndGlyphs" xml:space="preserve">7.2k</text>
<text x="92.20" y="148.40" font-size="8.6" fill="#d82020" stroke="#d82020" stroke-width="0.3" text-anchor="start" textLength="18.40" lengthAdjust="spacingAndGlyphs" xml:space="preserve">4,3 V</text>
<text x="120.30" y="148.30" font-size="8.6" fill="#1a1a1a" stroke="#1a1a1a" stroke-width="0.3" text-anchor="middle" textLength="9.20" lengthAdjust="spacingAndGlyphs" xml:space="preserve">R7</text>
<text x="120.30" y="164.40" font-size="8.6" fill="#1a1a1a" stroke="#1a1a1a" stroke-width="0.3" text-anchor="middle" textLength="15.50" lengthAdjust="spacingAndGlyphs" xml:space="preserve">2.8k</text>
<text x="177.30" y="148.30" font-size="8.6" fill="#1a1a1a" stroke="#1a1a1a" stroke-width="0.3" text-anchor="middle" textLength="13.60" lengthAdjust="spacingAndGlyphs" xml:space="preserve">R14</text>
<text x="177.30" y="164.40" font-size="8.6" fill="#1a1a1a" stroke="#1a1a1a" stroke-width="0.3" text-anchor="middle" textLength="13.20" lengthAdjust="spacingAndGlyphs" xml:space="preserve">10k</text>
<text x="199.80" y="156.40" font-size="8.6" fill="#1a1a1a" stroke="#1a1a1a" stroke-width="0.3" text-anchor="start" textLength="9.00" lengthAdjust="spacingAndGlyphs" xml:space="preserve">Us</text>
<text x="146.80" y="165.20" font-size="8.6" fill="#1a1a1a" stroke="#1a1a1a" stroke-width="0.3" text-anchor="start" textLength="9.50" lengthAdjust="spacingAndGlyphs" xml:space="preserve">C1</text>
<text x="147.30" y="179.40" font-size="8.6" fill="#1a1a1a" stroke="#1a1a1a" stroke-width="0.3" text-anchor="start" textLength="16.50" lengthAdjust="spacingAndGlyphs" xml:space="preserve">100n</text>
<text x="31.20" y="179.40" font-size="8.6" fill="#d82020" stroke="#d82020" stroke-width="0.3" text-anchor="start" textLength="42.80" lengthAdjust="spacingAndGlyphs" xml:space="preserve">R7, R8  Poti</text>
<line x1="31.20" y1="210.00" x2="71.00" y2="210.00" stroke="#6e62b4" stroke-width="1.0"/>
<line x1="31.20" y1="210.00" x2="31.20" y2="234.50" stroke="#6e62b4" stroke-width="1.0"/>
<line x1="71.00" y1="206.00" x2="71.00" y2="214.40" stroke="#585890" stroke-width="1.1"/>
<line x1="73.10" y1="206.00" x2="73.10" y2="214.40" stroke="#585890" stroke-width="1.1"/>
<line x1="73.10" y1="210.00" x2="130.30" y2="210.00" stroke="#6e62b4" stroke-width="1.0"/>
<rect x="130.30" y="206.60" width="21.40" height="7.10" stroke="#6a6aa8" stroke-width="1.0" fill="none"/>
<line x1="151.70" y1="210.00" x2="175.00" y2="210.00" stroke="#6e62b4" stroke-width="1.0"/>
<circle cx="51.70" cy="210.00" r="1.85" fill="#0000c8"/>
<circle cx="113.30" cy="210.00" r="1.85" fill="#0000c8"/>
<text x="72.20" y="202.90" font-size="8.6" fill="#1a1a1a" stroke="#1a1a1a" stroke-width="0.3" text-anchor="middle" textLength="9.50" lengthAdjust="spacingAndGlyphs" xml:space="preserve">C3</text>
<text x="72.20" y="222.50" font-size="8.6" fill="#1a1a1a" stroke="#1a1a1a" stroke-width="0.3" text-anchor="middle" textLength="8.60" lengthAdjust="spacingAndGlyphs" xml:space="preserve">1n</text>
<text x="141.40" y="204.00" font-size="8.6" fill="#1a1a1a" stroke="#1a1a1a" stroke-width="0.3" text-anchor="middle" textLength="13.60" lengthAdjust="spacingAndGlyphs" xml:space="preserve">R10</text>
<text x="141.40" y="221.00" font-size="8.6" fill="#1a1a1a" stroke="#1a1a1a" stroke-width="0.3" text-anchor="middle" textLength="13.00" lengthAdjust="spacingAndGlyphs" xml:space="preserve">470</text>
<line x1="179.60" y1="194.75" x2="179.60" y2="215.60" stroke="#8a8ac4" stroke-width="1.3"/>
<line x1="179.60" y1="197.50" x2="190.30" y2="197.50" stroke="#6e62b4" stroke-width="1.0"/>
<line x1="179.60" y1="212.50" x2="190.30" y2="212.50" stroke="#6e62b4" stroke-width="1.0"/>
<polygon points="175.00,208.70 178.40,210.00 175.00,211.30" stroke="#6a6aa8" stroke-width="0.8" fill="none"/>
<line x1="175.00" y1="210.00" x2="179.60" y2="210.00" stroke="#6a6aa8" stroke-width="0.9"/>
<polyline points="190.30,197.50 190.30,189.45 202.50,189.45" stroke="#6e62b4" stroke-width="1.0" fill="none"/>
<polygon points="199.90,187.85 203.30,189.45 199.90,191.05" fill="#111"/>
<line x1="198.50" y1="189.45" x2="202.50" y2="189.45" stroke="#111" stroke-width="1.0"/>
<line x1="190.30" y1="212.50" x2="190.30" y2="220.30" stroke="#6e62b4" stroke-width="1.0"/>
<text x="205.50" y="191.80" font-size="8.6" fill="#1a1a1a" stroke="#1a1a1a" stroke-width="0.3" text-anchor="start" textLength="9.40" lengthAdjust="spacingAndGlyphs" xml:space="preserve">Us</text>
<text x="168.70" y="204.90" font-size="8.6" fill="#1a1a1a" stroke="#1a1a1a" stroke-width="0.3" text-anchor="start" textLength="8.00" lengthAdjust="spacingAndGlyphs" xml:space="preserve">J1</text>
<text x="182.90" y="207.20" font-size="8.6" fill="#1a1a1a" stroke="#1a1a1a" stroke-width="0.3" text-anchor="start" textLength="17.00" lengthAdjust="spacingAndGlyphs" xml:space="preserve">J310</text>
<text x="199.90" y="217.90" font-size="8.6" fill="#d82020" stroke="#d82020" stroke-width="0.3" text-anchor="start" textLength="18.70" lengthAdjust="spacingAndGlyphs" xml:space="preserve">6,0 V</text>
<circle cx="190.30" cy="220.30" r="1.85" fill="#0000c8"/>
<polyline points="190.30,220.30 256.80,220.30 256.80,281.20" stroke="#6e62b4" stroke-width="1.0" fill="none"/>
<line x1="179.60" y1="225.25" x2="179.60" y2="246.25" stroke="#8a8ac4" stroke-width="1.3"/>
<line x1="179.60" y1="228.30" x2="190.30" y2="228.30" stroke="#6e62b4" stroke-width="1.0"/>
<line x1="179.60" y1="243.10" x2="190.30" y2="243.10" stroke="#6e62b4" stroke-width="1.0"/>
<polygon points="175.00,239.60 178.40,240.90 175.00,242.20" stroke="#6a6aa8" stroke-width="0.8" fill="none"/>
<line x1="175.00" y1="240.90" x2="179.60" y2="240.90" stroke="#6a6aa8" stroke-width="0.9"/>
<line x1="190.30" y1="228.30" x2="190.30" y2="220.30" stroke="#6e62b4" stroke-width="1.0"/>
<line x1="190.30" y1="243.10" x2="190.30" y2="258.90" stroke="#6e62b4" stroke-width="1.0"/>
<polyline points="175.00,240.90 169.60,240.90 169.60,353.70 175.00,353.70" stroke="#6e62b4" stroke-width="1.0" fill="none"/>
<text x="168.30" y="233.50" font-size="8.6" fill="#1a1a1a" stroke="#1a1a1a" stroke-width="0.3" text-anchor="start" textLength="7.60" lengthAdjust="spacingAndGlyphs" xml:space="preserve">J3</text>
<text x="183.80" y="237.50" font-size="8.6" fill="#1a1a1a" stroke="#1a1a1a" stroke-width="0.3" text-anchor="start" textLength="17.50" lengthAdjust="spacingAndGlyphs" xml:space="preserve">J310</text>
<text x="195.40" y="248.60" font-size="8.6" fill="#d82020" stroke="#d82020" stroke-width="0.3" text-anchor="start" textLength="20.50" lengthAdjust="spacingAndGlyphs" xml:space="preserve">14mA</text>
<rect x="186.60" y="258.90" width="7.20" height="20.50" stroke="#6a6aa8" stroke-width="1.0" fill="none"/>
<line x1="190.20" y1="279.40" x2="190.20" y2="315.40" stroke="#6e62b4" stroke-width="1.0"/>
<rect x="186.60" y="315.40" width="7.20" height="20.50" stroke="#6a6aa8" stroke-width="1.0" fill="none"/>
<line x1="190.20" y1="335.90" x2="190.20" y2="351.20" stroke="#6e62b4" stroke-width="1.0"/>
<text x="194.60" y="266.50" font-size="8.6" fill="#1a1a1a" stroke="#1a1a1a" stroke-width="0.3" text-anchor="start" textLength="9.40" lengthAdjust="spacingAndGlyphs" xml:space="preserve">R3</text>
<text x="194.60" y="278.10" font-size="8.6" fill="#1a1a1a" stroke="#1a1a1a" stroke-width="0.3" text-anchor="start" textLength="13.40" lengthAdjust="spacingAndGlyphs" xml:space="preserve">125</text>
<text x="194.60" y="323.50" font-size="8.6" fill="#1a1a1a" stroke="#1a1a1a" stroke-width="0.3" text-anchor="start" textLength="9.40" lengthAdjust="spacingAndGlyphs" xml:space="preserve">R4</text>
<text x="194.60" y="335.20" font-size="8.6" fill="#1a1a1a" stroke="#1a1a1a" stroke-width="0.3" text-anchor="start" textLength="13.40" lengthAdjust="spacingAndGlyphs" xml:space="preserve">125</text>
<circle cx="169.60" cy="297.20" r="1.85" fill="#0000c8"/>
<circle cx="190.20" cy="297.20" r="1.85" fill="#0000c8"/>
<line x1="169.60" y1="297.20" x2="200.40" y2="297.20" stroke="#6e62b4" stroke-width="1.0"/>
<polygon points="200.40,291.70 200.40,302.70 206.10,297.20" stroke="#6a6aa8" stroke-width="1" fill="none"/>
<line x1="179.80" y1="348.40" x2="179.80" y2="368.50" stroke="#8a8ac4" stroke-width="1.3"/>
<line x1="179.80" y1="351.20" x2="190.20" y2="351.20" stroke="#6e62b4" stroke-width="1.0"/>
<line x1="179.80" y1="366.60" x2="190.20" y2="366.60" stroke="#6e62b4" stroke-width="1.0"/>
<polygon points="175.20,352.40 178.60,353.70 175.20,355.00" stroke="#6a6aa8" stroke-width="0.8" fill="none"/>
<line x1="175.20" y1="353.70" x2="179.80" y2="353.70" stroke="#6a6aa8" stroke-width="0.9"/>
<line x1="190.20" y1="366.60" x2="190.20" y2="374.60" stroke="#6e62b4" stroke-width="1.0"/>
<text x="168.50" y="365.60" font-size="8.6" fill="#1a1a1a" stroke="#1a1a1a" stroke-width="0.3" text-anchor="start" textLength="8.00" lengthAdjust="spacingAndGlyphs" xml:space="preserve">J4</text>
<text x="183.00" y="361.60" font-size="8.6" fill="#1a1a1a" stroke="#1a1a1a" stroke-width="0.3" text-anchor="start" textLength="16.80" lengthAdjust="spacingAndGlyphs" xml:space="preserve">J310</text>
<text x="202.70" y="351.20" font-size="8.6" fill="#d82020" stroke="#d82020" stroke-width="0.3" text-anchor="start" textLength="41.20" lengthAdjust="spacingAndGlyphs" xml:space="preserve">R3, R4 Poti</text>
<circle cx="190.20" cy="374.60" r="1.85" fill="#0000c8"/>
<line x1="190.20" y1="374.60" x2="225.10" y2="374.60" stroke="#6e62b4" stroke-width="1.0"/>
<line x1="225.10" y1="370.00" x2="225.10" y2="378.40" stroke="#585890" stroke-width="1.1"/>
<line x1="227.40" y1="370.00" x2="227.40" y2="378.40" stroke="#585890" stroke-width="1.1"/>
<polyline points="227.40,374.60 256.80,374.60 256.80,307.20" stroke="#6e62b4" stroke-width="1.0" fill="none"/>
<text x="225.80" y="367.30" font-size="8.6" fill="#1a1a1a" stroke="#1a1a1a" stroke-width="0.3" text-anchor="middle" textLength="9.50" lengthAdjust="spacingAndGlyphs" xml:space="preserve">C4</text>
<text x="225.80" y="386.50" font-size="8.6" fill="#1a1a1a" stroke="#1a1a1a" stroke-width="0.3" text-anchor="middle" textLength="17.20" lengthAdjust="spacingAndGlyphs" xml:space="preserve">470n</text>
<line x1="179.80" y1="378.90" x2="179.80" y2="399.30" stroke="#8a8ac4" stroke-width="1.3"/>
<line x1="179.80" y1="381.60" x2="190.20" y2="381.60" stroke="#6e62b4" stroke-width="1.0"/>
<line x1="179.80" y1="397.30" x2="190.20" y2="397.30" stroke="#6e62b4" stroke-width="1.0"/>
<polygon points="175.20,383.20 178.60,384.50 175.20,385.80" stroke="#6a6aa8" stroke-width="0.8" fill="none"/>
<line x1="175.20" y1="384.50" x2="179.80" y2="384.50" stroke="#6a6aa8" stroke-width="0.9"/>
<line x1="190.20" y1="381.60" x2="190.20" y2="374.60" stroke="#6e62b4" stroke-width="1.0"/>
<polyline points="190.20,397.30 190.20,405.00 202.60,405.00" stroke="#6e62b4" stroke-width="1.0" fill="none"/>
<polygon points="200.00,403.40 203.40,405.00 200.00,406.60" fill="#111"/>
<line x1="198.60" y1="405.00" x2="202.60" y2="405.00" stroke="#111" stroke-width="1.0"/>
<text x="205.40" y="408.00" font-size="8.6" fill="#1a1a1a" stroke="#1a1a1a" stroke-width="0.3" text-anchor="start" textLength="9.20" lengthAdjust="spacingAndGlyphs" xml:space="preserve">Us</text>
<text x="168.50" y="396.10" font-size="8.6" fill="#1a1a1a" stroke="#1a1a1a" stroke-width="0.3" text-anchor="start" textLength="7.60" lengthAdjust="spacingAndGlyphs" xml:space="preserve">J2</text>
<text x="183.40" y="392.70" font-size="8.6" fill="#1a1a1a" stroke="#1a1a1a" stroke-width="0.3" text-anchor="start" textLength="16.80" lengthAdjust="spacingAndGlyphs" xml:space="preserve">J310</text>
<polyline points="31.20,345.40 31.20,384.50 71.00,384.50" stroke="#6e62b4" stroke-width="1.0" fill="none"/>
<line x1="71.00" y1="380.00" x2="71.00" y2="389.00" stroke="#585890" stroke-width="1.1"/>
<line x1="73.10" y1="380.00" x2="73.10" y2="389.00" stroke="#585890" stroke-width="1.1"/>
<line x1="73.10" y1="384.50" x2="130.50" y2="384.50" stroke="#6e62b4" stroke-width="1.0"/>
<rect x="130.50" y="381.00" width="21.20" height="7.30" stroke="#6a6aa8" stroke-width="1.0" fill="none"/>
<line x1="151.70" y1="384.50" x2="175.00" y2="384.50" stroke="#6e62b4" stroke-width="1.0"/>
<circle cx="51.70" cy="384.50" r="1.85" fill="#0000c8"/>
<circle cx="113.20" cy="384.50" r="1.85" fill="#0000c8"/>
<text x="72.20" y="377.20" font-size="8.6" fill="#1a1a1a" stroke="#1a1a1a" stroke-width="0.3" text-anchor="middle" textLength="9.50" lengthAdjust="spacingAndGlyphs" xml:space="preserve">C2</text>
<text x="72.20" y="396.30" font-size="8.6" fill="#1a1a1a" stroke="#1a1a1a" stroke-width="0.3" text-anchor="middle" textLength="8.60" lengthAdjust="spacingAndGlyphs" xml:space="preserve">1n</text>
<text x="141.30" y="378.80" font-size="8.6" fill="#1a1a1a" stroke="#1a1a1a" stroke-width="0.3" text-anchor="middle" textLength="12.80" lengthAdjust="spacingAndGlyphs" xml:space="preserve">R11</text>
<text x="141.30" y="395.60" font-size="8.6" fill="#1a1a1a" stroke="#1a1a1a" stroke-width="0.3" text-anchor="middle" textLength="13.00" lengthAdjust="spacingAndGlyphs" xml:space="preserve">470</text>
<path d="M31.20,234.50 C23.40,234.94 23.40,242.96 31.20,243.40 C23.40,243.84 23.40,251.86 31.20,252.30 C23.40,252.74 23.40,260.75 31.20,261.20 " stroke="#6a6aa8" stroke-width="1" fill="none"/>
<ellipse cx="32.20" cy="243.40" rx="3.0" ry="1.3" stroke="#6a6aa8" stroke-width="0.9" fill="none"/>
<ellipse cx="32.20" cy="252.30" rx="3.0" ry="1.3" stroke="#6a6aa8" stroke-width="0.9" fill="none"/>
<line x1="31.20" y1="261.20" x2="31.20" y2="289.70" stroke="#6e62b4" stroke-width="1.0"/>
<rect x="27.60" y="289.70" width="7.20" height="20.90" stroke="#6a6aa8" stroke-width="1.0" fill="none"/>
<line x1="31.20" y1="310.60" x2="31.20" y2="325.00" stroke="#6e62b4" stroke-width="1.0"/>
<circle cx="30.9" cy="335.2" r="10.2" stroke="#6a6aa8" stroke-width="1" fill="none"/>
<line x1="28.20" y1="329.30" x2="33.60" y2="329.30" stroke="#6a6aa8" stroke-width="0.9"/>
<line x1="30.90" y1="326.60" x2="30.90" y2="332.00" stroke="#6a6aa8" stroke-width="0.9"/>
<line x1="28.20" y1="342.60" x2="33.60" y2="342.60" stroke="#6a6aa8" stroke-width="0.9"/>
<text x="15.70" y="246.50" font-size="8.6" fill="#1a1a1a" stroke="#1a1a1a" stroke-width="0.3" text-anchor="start" textLength="8.30" lengthAdjust="spacingAndGlyphs" xml:space="preserve">L3</text>
<text x="8.00" y="259.10" font-size="8.6" fill="#1a1a1a" stroke="#1a1a1a" stroke-width="0.3" text-anchor="start" textLength="17.00" lengthAdjust="spacingAndGlyphs" xml:space="preserve">180µ</text>
<text x="35.70" y="297.90" font-size="8.6" fill="#1a1a1a" stroke="#1a1a1a" stroke-width="0.3" text-anchor="start" textLength="9.40" lengthAdjust="spacingAndGlyphs" xml:space="preserve">R5</text>
<text x="36.30" y="309.50" font-size="8.6" fill="#1a1a1a" stroke="#1a1a1a" stroke-width="0.3" text-anchor="start" textLength="4.60" lengthAdjust="spacingAndGlyphs" xml:space="preserve">1</text>
<text x="18.70" y="351.70" font-size="8.6" fill="#1a1a1a" stroke="#1a1a1a" stroke-width="0.3" text-anchor="middle" textLength="9.60" lengthAdjust="spacingAndGlyphs" xml:space="preserve">V2</text>
<text x="10.70" y="361.20" font-size="8.6" fill="#1a1a1a" stroke="#1a1a1a" stroke-width="0.3" text-anchor="start" textLength="16.90" lengthAdjust="spacingAndGlyphs" xml:space="preserve">AC 4</text>
<line x1="51.70" y1="210.00" x2="51.70" y2="321.80" stroke="#6e62b4" stroke-width="1.0"/>
<line x1="46.00" y1="321.80" x2="56.70" y2="321.80" stroke="#585890" stroke-width="1.1"/>
<line x1="46.00" y1="324.40" x2="56.70" y2="324.40" stroke="#585890" stroke-width="1.1"/>
<line x1="51.70" y1="324.40" x2="51.70" y2="384.50" stroke="#6e62b4" stroke-width="1.0"/>
<text x="53.50" y="318.50" font-size="8.6" fill="#1a1a1a" stroke="#1a1a1a" stroke-width="0.3" text-anchor="start" textLength="9.80" lengthAdjust="spacingAndGlyphs" xml:space="preserve">C5</text>
<text x="53.50" y="333.90" font-size="8.6" fill="#1a1a1a" stroke="#1a1a1a" stroke-width="0.3" text-anchor="start" textLength="17.80" lengthAdjust="spacingAndGlyphs" xml:space="preserve">500p</text>
<line x1="97.50" y1="153.60" x2="97.50" y2="258.90" stroke="#6e62b4" stroke-width="1.0"/>
<rect x="94.00" y="258.90" width="7.40" height="20.50" stroke="#6a6aa8" stroke-width="1.0" fill="none"/>
<polyline points="97.50,279.40 97.50,296.90 113.20,296.90" stroke="#6e62b4" stroke-width="1.0" fill="none"/>
<text x="92.70" y="266.70" font-size="8.6" fill="#1a1a1a" stroke="#1a1a1a" stroke-width="0.3" text-anchor="end" textLength="13.40" lengthAdjust="spacingAndGlyphs" xml:space="preserve">R12</text>
<text x="92.70" y="277.80" font-size="8.6" fill="#1a1a1a" stroke="#1a1a1a" stroke-width="0.3" text-anchor="end" textLength="17.60" lengthAdjust="spacingAndGlyphs" xml:space="preserve">470k</text>
<line x1="113.20" y1="210.00" x2="113.20" y2="238.10" stroke="#6e62b4" stroke-width="1.0"/>
<rect x="109.60" y="238.10" width="7.30" height="20.50" stroke="#6a6aa8" stroke-width="1.0" fill="none"/>
<line x1="113.20" y1="258.60" x2="113.20" y2="330.70" stroke="#6e62b4" stroke-width="1.0"/>
<circle cx="113.20" cy="296.90" r="1.85" fill="#0000c8"/>
<rect x="109.60" y="330.70" width="7.30" height="20.50" stroke="#6a6aa8" stroke-width="1.0" fill="none"/>
<line x1="113.20" y1="351.20" x2="113.20" y2="384.50" stroke="#6e62b4" stroke-width="1.0"/>
<text x="118.40" y="246.10" font-size="8.6" fill="#1a1a1a" stroke="#1a1a1a" stroke-width="0.3" text-anchor="start" textLength="8.60" lengthAdjust="spacingAndGlyphs" xml:space="preserve">R1</text>
<text x="118.50" y="256.90" font-size="8.6" fill="#1a1a1a" stroke="#1a1a1a" stroke-width="0.3" text-anchor="start" textLength="26.00" lengthAdjust="spacingAndGlyphs" xml:space="preserve">3.8meg</text>
<text x="118.20" y="337.50" font-size="8.6" fill="#1a1a1a" stroke="#1a1a1a" stroke-width="0.3" text-anchor="start" textLength="9.40" lengthAdjust="spacingAndGlyphs" xml:space="preserve">R2</text>
<text x="118.20" y="349.00" font-size="8.6" fill="#1a1a1a" stroke="#1a1a1a" stroke-width="0.3" text-anchor="start" textLength="26.00" lengthAdjust="spacingAndGlyphs" xml:space="preserve">3.8meg</text>
<path d="M256.80,281.20 C264.60,281.63 264.60,289.43 256.80,289.87 C264.60,290.30 264.60,298.10 256.80,298.53 C264.60,298.97 264.60,306.77 256.80,307.20 " stroke="#6a6aa8" stroke-width="1" fill="none"/>
<ellipse cx="255.80" cy="289.87" rx="3.0" ry="1.3" stroke="#6a6aa8" stroke-width="0.9" fill="none"/>
<ellipse cx="255.80" cy="298.53" rx="3.0" ry="1.3" stroke="#6a6aa8" stroke-width="0.9" fill="none"/>
<path d="M272.40,281.20 C264.60,281.63 264.60,289.43 272.40,289.87 C264.60,290.30 264.60,298.10 272.40,298.53 C264.60,298.97 264.60,306.77 272.40,307.20 " stroke="#6a6aa8" stroke-width="1" fill="none"/>
<ellipse cx="273.40" cy="289.87" rx="3.0" ry="1.3" stroke="#6a6aa8" stroke-width="0.9" fill="none"/>
<ellipse cx="273.40" cy="298.53" rx="3.0" ry="1.3" stroke="#6a6aa8" stroke-width="0.9" fill="none"/>
<circle cx="254.1" cy="285.2" r="0.9" stroke="#6a6aa8" stroke-width="0.7" fill="none"/>
<circle cx="274.1" cy="303.7" r="0.9" stroke="#6a6aa8" stroke-width="0.7" fill="none"/>
<polyline points="272.40,281.20 272.40,271.50 308.20,271.50" stroke="#6e62b4" stroke-width="1.0" fill="none"/>
<circle cx="302.50" cy="271.50" r="1.85" fill="#0000c8"/>
<line x1="302.60" y1="271.50" x2="302.60" y2="320.60" stroke="#6e62b4" stroke-width="1.0"/>
<rect x="299.40" y="320.60" width="7.20" height="20.60" stroke="#6a6aa8" stroke-width="1.0" fill="none"/>
<line x1="302.60" y1="341.20" x2="302.60" y2="348.60" stroke="#6e62b4" stroke-width="1.0"/>
<polygon points="297.15,348.60 308.65,348.60 302.90,354.50" stroke="#6a6aa8" stroke-width="1" fill="none"/>
<line x1="272.40" y1="307.20" x2="272.40" y2="348.60" stroke="#6e62b4" stroke-width="1.0"/>
<polygon points="266.60,348.60 277.80,348.60 272.20,354.30" stroke="#6a6aa8" stroke-width="1" fill="none"/>
<text x="241.40" y="292.50" font-size="8.6" fill="#1a1a1a" stroke="#1a1a1a" stroke-width="0.3" text-anchor="start" textLength="9.20" lengthAdjust="spacingAndGlyphs" xml:space="preserve">L1</text>
<text x="234.30" y="302.30" font-size="8.6" fill="#1a1a1a" stroke="#1a1a1a" stroke-width="0.3" text-anchor="start" textLength="16.90" lengthAdjust="spacingAndGlyphs" xml:space="preserve">500µ</text>
<text x="277.90" y="292.50" font-size="8.6" fill="#1a1a1a" stroke="#1a1a1a" stroke-width="0.3" text-anchor="start" textLength="9.40" lengthAdjust="spacingAndGlyphs" xml:space="preserve">L2</text>
<text x="276.70" y="302.50" font-size="8.6" fill="#1a1a1a" stroke="#1a1a1a" stroke-width="0.3" text-anchor="start" textLength="16.70" lengthAdjust="spacingAndGlyphs" xml:space="preserve">500µ</text>
<text x="269.50" y="231.20" font-size="8.6" fill="#1a1a1a" stroke="#1a1a1a" stroke-width="0.3" text-anchor="start" textLength="32.80" lengthAdjust="spacingAndGlyphs" xml:space="preserve">k1 l1 l2 1</text>
<text x="264.50" y="253.80" font-size="8.6" fill="#d82020" stroke="#d82020" stroke-width="0.3" text-anchor="start" textLength="74.50" lengthAdjust="spacingAndGlyphs" xml:space="preserve">BN 73-202 8 Wdg.bif</text>
<polygon points="308.2,267.4 321.0,267.4 325.5,271.8 321.0,276.3 308.2,276.3" stroke="#6a6aa8" stroke-width="1" fill="none"/>
<text x="309.00" y="274.30" font-size="8.6" fill="#1a1a1a" stroke="#1a1a1a" stroke-width="0.3" text-anchor="start" textLength="9.60" lengthAdjust="spacingAndGlyphs" xml:space="preserve">RX</text>
<text x="283.00" y="327.20" font-size="8.6" fill="#1a1a1a" stroke="#1a1a1a" stroke-width="0.3" text-anchor="start" textLength="12.80" lengthAdjust="spacingAndGlyphs" xml:space="preserve">R13</text>
<text x="295.80" y="338.90" font-size="8.6" fill="#1a1a1a" stroke="#1a1a1a" stroke-width="0.3" text-anchor="end" textLength="8.80" lengthAdjust="spacingAndGlyphs" xml:space="preserve">50</text>
<circle cx="339.0" cy="325.0" r="10.5" stroke="#6a6aa8" stroke-width="1" fill="none"/>
<line x1="339.00" y1="314.50" x2="339.00" y2="310.00" stroke="#6e62b4" stroke-width="1.0"/>
<polygon points="337.40,312.60 339.00,309.20 340.60,312.60" fill="#111"/>
<line x1="339.00" y1="314.00" x2="339.00" y2="310.00" stroke="#111" stroke-width="1.0"/>
<line x1="336.30" y1="319.75" x2="341.70" y2="319.75" stroke="#6a6aa8" stroke-width="0.9"/>
<line x1="339.00" y1="317.00" x2="339.00" y2="322.50" stroke="#6a6aa8" stroke-width="0.9"/>
<line x1="336.30" y1="332.25" x2="341.70" y2="332.25" stroke="#6a6aa8" stroke-width="0.9"/>
<line x1="339.00" y1="335.50" x2="339.00" y2="337.75" stroke="#6e62b4" stroke-width="1.0"/>
<polygon points="333.05,337.75 344.95,337.75 339.00,344.35" stroke="#6a6aa8" stroke-width="1" fill="none"/>
<text x="0" y="0" font-size="8.6" fill="#1a1a1a" stroke="#1a1a1a" stroke-width="0.3" textLength="8.8" lengthAdjust="spacingAndGlyphs" transform="translate(341.2,307.25) rotate(-90)">Us</text>
<text x="352.30" y="323.50" font-size="8.6" fill="#1a1a1a" stroke="#1a1a1a" stroke-width="0.3" text-anchor="start" textLength="8.30" lengthAdjust="spacingAndGlyphs" xml:space="preserve">V1</text>
<text x="352.80" y="337.40" font-size="8.6" fill="#1a1a1a" stroke="#1a1a1a" stroke-width="0.3" text-anchor="start" textLength="7.80" lengthAdjust="spacingAndGlyphs" xml:space="preserve">12</text>
<text x="351.90" y="299.90" font-size="8.6" fill="#d82020" stroke="#d82020" stroke-width="0.3" text-anchor="start" textLength="20.60" lengthAdjust="spacingAndGlyphs" xml:space="preserve">30mA</text>
<text x="302.60" y="369.40" font-size="8.6" fill="#1a1a1a" stroke="#1a1a1a" stroke-width="0.3" text-anchor="start" textLength="49.80" lengthAdjust="spacingAndGlyphs" xml:space="preserve">.net I(R13) V2</text>
<text x="282.20" y="381.70" font-size="8.6" fill="#1a1a1a" stroke="#1a1a1a" stroke-width="0.3" text-anchor="start" textLength="80.70" lengthAdjust="spacingAndGlyphs" xml:space="preserve">;option plotwinsize=0</text>
<text x="259.70" y="394.50" font-size="8.6" fill="#1a1a1a" stroke="#1a1a1a" stroke-width="0.3" text-anchor="start" textLength="106.60" lengthAdjust="spacingAndGlyphs" xml:space="preserve">;tran 0 500u 490u 10n startup</text>
<text x="282.20" y="403.70" font-size="8.6" fill="#1a1a1a" stroke="#1a1a1a" stroke-width="0.3" text-anchor="start" textLength="87.60" lengthAdjust="spacingAndGlyphs" xml:space="preserve">.ac dec 10001 10k 1meg</text>
</g>
<text x="14.3" y="12.9" font-family="Liberation Sans" font-size="7.3" font-weight="bold" fill="#ffffff" textLength="135.3" lengthAdjust="spacingAndGlyphs">Symm-Imp.Wandl-J310-stromquelle.asc</text>
<rect x="360.60" y="5.6" width="9.0" height="7.6" fill="#e4ecf4"/>
<path d="M369.60,5.6 V13.2 H360.60" stroke="#404040" stroke-width="0.9" fill="none"/>
<rect x="370.60" y="5.6" width="9.0" height="7.6" fill="#e4ecf4"/>
<path d="M379.60,5.6 V13.2 H370.60" stroke="#404040" stroke-width="0.9" fill="none"/>
<rect x="381.25" y="5.6" width="9.0" height="7.6" fill="#e4ecf4"/>
<path d="M390.25,5.6 V13.2 H381.25" stroke="#404040" stroke-width="0.9" fill="none"/>
<rect x="362.8" y="11.2" width="4" height="1.2" fill="#111"/>
<rect x="372.6" y="7.3" width="5" height="4.4" fill="none" stroke="#4a4a4a" stroke-width="0.8"/>
<rect x="372.2" y="6.9" width="5.8" height="1.0" fill="#3a3a3a"/>
<path d="M383.6,7.6 L388.2,11.6 M388.2,7.6 L383.6,11.6" stroke="#111" stroke-width="1.2"/>
<path d="M6,7 Q4.5,11 8,13.5 Q11,14 12,12" stroke="#3050e0" stroke-width="1.5" fill="none"/>
<rect x="4" y="546.6" width="388" height="9" fill="#ffffff"/>
<rect x="13.5" y="547.4" width="361" height="7.6" fill="#ecebe2"/>
<rect x="12.3" y="546.8" width="1.2" height="8.6" fill="#6a6a6a"/>
<rect x="373.8" y="546.8" width="1" height="8.6" fill="#6a6a6a"/>
<rect x="381.3" y="546.8" width="9.2" height="8.6" fill="#ffffff"/>
<path d="M390.5,546.8 V555.4 H381.3" stroke="#707070" stroke-width="0.9" fill="none"/>
<polygon points="9.0,549.4 6.4,551.1 9.0,552.8" fill="#111"/>
<polygon points="385.4,549.4 388,551.1 385.4,552.8" fill="#111"/>
<rect x="2.4" y="555.1" width="390" height="0.8" fill="#6a6a6a"/>
<rect x="393.0" y="2.1" width="1.8" height="557" fill="#96968f"/>
<rect x="397.4" y="4.2" width="723.6" height="10.6" fill="url(#tb2)"/>
<rect x="397.6" y="16.7" width="723.4" height="839" fill="#000000"/>
<rect x="397.6" y="555.9" width="723.4" height="3.2" fill="#ffffff"/>
<text x="408" y="12.9" font-family="Liberation Sans" font-size="7.3" font-weight="bold" fill="#e8e8e8" textLength="136" lengthAdjust="spacingAndGlyphs">Symm-Imp.Wandl-J310-stromquelle.asc</text>
<rect x="397.6" y="4.8" width="10.5" height="9.6" fill="#e8e8e8"/>
<path d="M398,5 V14.4 H408" stroke="#202020" stroke-width="0.9" fill="none"/>
<path d="M398.5,11 L401,8 L403,10 L405.5,7.5 L408,9" stroke="#e03040" stroke-width="1.1" fill="none"/>
<g style='font-family:"Liberation Sans", sans-serif'>
<g stroke="#c8c8c8" stroke-width="1.05" stroke-dasharray="1.8 1.827" stroke-dashoffset="0.56">
<line x1="495.70" y1="28.20" x2="495.70" y2="540.70"/>
<line x1="565.11" y1="28.20" x2="565.11" y2="540.70"/>
<line x1="634.51" y1="28.20" x2="634.51" y2="540.70"/>
<line x1="703.92" y1="28.20" x2="703.92" y2="540.70"/>
<line x1="773.32" y1="28.20" x2="773.32" y2="540.70"/>
<line x1="842.72" y1="28.20" x2="842.72" y2="540.70"/>
<line x1="912.13" y1="28.20" x2="912.13" y2="540.70"/>
<line x1="981.53" y1="28.20" x2="981.53" y2="540.70"/>
<line x1="1050.94" y1="28.20" x2="1050.94" y2="540.70"/>
</g>
<g stroke="#c8c8c8" stroke-width="1.05" stroke-dasharray="1.8 1.831" stroke-dashoffset="0.56">
<line x1="426.30" y1="70.91" x2="1113.40" y2="70.91"/>
<line x1="426.30" y1="113.62" x2="1113.40" y2="113.62"/>
<line x1="426.30" y1="156.32" x2="1113.40" y2="156.32"/>
<line x1="426.30" y1="199.03" x2="1113.40" y2="199.03"/>
<line x1="426.30" y1="241.74" x2="1113.40" y2="241.74"/>
<line x1="426.30" y1="284.45" x2="1113.40" y2="284.45"/>
<line x1="426.30" y1="327.16" x2="1113.40" y2="327.16"/>
<line x1="426.30" y1="369.87" x2="1113.40" y2="369.87"/>
<line x1="426.30" y1="412.57" x2="1113.40" y2="412.57"/>
<line x1="426.30" y1="455.28" x2="1113.40" y2="455.28"/>
<line x1="426.30" y1="497.99" x2="1113.40" y2="497.99"/>
</g>
<rect x="426.30" y="28.20" width="687.10" height="512.50" fill="none" stroke="#d4d4d4" stroke-width="1.3"/>
<line x1="421.8" y1="28.20" x2="426.30" y2="28.20" stroke="#e6e6e6" stroke-width="1"/>
<text x="421.2" y="31.15" font-size="8.3" font-weight="bold" fill="#f0f0f0" stroke="#f0f0f0" stroke-width="0.25" text-anchor="end">60dB</text>
<line x1="421.8" y1="70.91" x2="426.30" y2="70.91" stroke="#e6e6e6" stroke-width="1"/>
<text x="421.2" y="73.86" font-size="8.3" font-weight="bold" fill="#f0f0f0" stroke="#f0f0f0" stroke-width="0.25" text-anchor="end">54dB</text>
<line x1="421.8" y1="113.62" x2="426.30" y2="113.62" stroke="#e6e6e6" stroke-width="1"/>
<text x="421.2" y="116.57" font-size="8.3" font-weight="bold" fill="#f0f0f0" stroke="#f0f0f0" stroke-width="0.25" text-anchor="end">48dB</text>
<line x1="421.8" y1="156.32" x2="426.30" y2="156.32" stroke="#e6e6e6" stroke-width="1"/>
<text x="421.2" y="159.27" font-size="8.3" font-weight="bold" fill="#f0f0f0" stroke="#f0f0f0" stroke-width="0.25" text-anchor="end">42dB</text>
<line x1="421.8" y1="199.03" x2="426.30" y2="199.03" stroke="#e6e6e6" stroke-width="1"/>
<text x="421.2" y="201.98" font-size="8.3" font-weight="bold" fill="#f0f0f0" stroke="#f0f0f0" stroke-width="0.25" text-anchor="end">36dB</text>
<line x1="421.8" y1="241.74" x2="426.30" y2="241.74" stroke="#e6e6e6" stroke-width="1"/>
<text x="421.2" y="244.69" font-size="8.3" font-weight="bold" fill="#f0f0f0" stroke="#f0f0f0" stroke-width="0.25" text-anchor="end">30dB</text>
<line x1="421.8" y1="284.45" x2="426.30" y2="284.45" stroke="#e6e6e6" stroke-width="1"/>
<text x="421.2" y="287.40" font-size="8.3" font-weight="bold" fill="#f0f0f0" stroke="#f0f0f0" stroke-width="0.25" text-anchor="end">24dB</text>
<line x1="421.8" y1="327.16" x2="426.30" y2="327.16" stroke="#e6e6e6" stroke-width="1"/>
<text x="421.2" y="330.11" font-size="8.3" font-weight="bold" fill="#f0f0f0" stroke="#f0f0f0" stroke-width="0.25" text-anchor="end">18dB</text>
<line x1="421.8" y1="369.87" x2="426.30" y2="369.87" stroke="#e6e6e6" stroke-width="1"/>
<text x="421.2" y="372.82" font-size="8.3" font-weight="bold" fill="#f0f0f0" stroke="#f0f0f0" stroke-width="0.25" text-anchor="end">12dB</text>
<line x1="421.8" y1="412.57" x2="426.30" y2="412.57" stroke="#e6e6e6" stroke-width="1"/>
<text x="421.2" y="415.52" font-size="8.3" font-weight="bold" fill="#f0f0f0" stroke="#f0f0f0" stroke-width="0.25" text-anchor="end">6dB</text>
<line x1="421.8" y1="455.28" x2="426.30" y2="455.28" stroke="#e6e6e6" stroke-width="1"/>
<text x="421.2" y="458.23" font-size="8.3" font-weight="bold" fill="#f0f0f0" stroke="#f0f0f0" stroke-width="0.25" text-anchor="end">0dB</text>
<line x1="421.8" y1="497.99" x2="426.30" y2="497.99" stroke="#e6e6e6" stroke-width="1"/>
<text x="421.2" y="500.94" font-size="8.3" font-weight="bold" fill="#f0f0f0" stroke="#f0f0f0" stroke-width="0.25" text-anchor="end">-6dB</text>
<line x1="421.8" y1="540.70" x2="426.30" y2="540.70" stroke="#e6e6e6" stroke-width="1"/>
<text x="421.2" y="543.65" font-size="8.3" font-weight="bold" fill="#f0f0f0" stroke="#f0f0f0" stroke-width="0.25" text-anchor="end">-12dB</text>
<line x1="426.30" y1="540.70" x2="426.30" y2="544.6" stroke="#e6e6e6" stroke-width="1"/>
<text x="426.30" y="553.3" font-size="8.3" font-weight="bold" fill="#f0f0f0" stroke="#f0f0f0" stroke-width="0.25" text-anchor="middle" textLength="34.2" lengthAdjust="spacingAndGlyphs">0.01MHz</text>
<line x1="495.70" y1="540.70" x2="495.70" y2="544.6" stroke="#e6e6e6" stroke-width="1"/>
<text x="495.70" y="553.3" font-size="8.3" font-weight="bold" fill="#f0f0f0" stroke="#f0f0f0" stroke-width="0.25" text-anchor="middle" textLength="34.2" lengthAdjust="spacingAndGlyphs">0.11MHz</text>
<line x1="565.11" y1="540.70" x2="565.11" y2="544.6" stroke="#e6e6e6" stroke-width="1"/>
<text x="565.11" y="553.3" font-size="8.3" font-weight="bold" fill="#f0f0f0" stroke="#f0f0f0" stroke-width="0.25" text-anchor="middle" textLength="34.2" lengthAdjust="spacingAndGlyphs">0.21MHz</text>
<line x1="634.51" y1="540.70" x2="634.51" y2="544.6" stroke="#e6e6e6" stroke-width="1"/>
<text x="634.51" y="553.3" font-size="8.3" font-weight="bold" fill="#f0f0f0" stroke="#f0f0f0" stroke-width="0.25" text-anchor="middle" textLength="34.2" lengthAdjust="spacingAndGlyphs">0.31MHz</text>
<line x1="703.92" y1="540.70" x2="703.92" y2="544.6" stroke="#e6e6e6" stroke-width="1"/>
<text x="703.92" y="553.3" font-size="8.3" font-weight="bold" fill="#f0f0f0" stroke="#f0f0f0" stroke-width="0.25" text-anchor="middle" textLength="34.2" lengthAdjust="spacingAndGlyphs">0.41MHz</text>
<line x1="773.32" y1="540.70" x2="773.32" y2="544.6" stroke="#e6e6e6" stroke-width="1"/>
<text x="773.32" y="553.3" font-size="8.3" font-weight="bold" fill="#f0f0f0" stroke="#f0f0f0" stroke-width="0.25" text-anchor="middle" textLength="34.2" lengthAdjust="spacingAndGlyphs">0.51MHz</text>
<line x1="842.72" y1="540.70" x2="842.72" y2="544.6" stroke="#e6e6e6" stroke-width="1"/>
<text x="842.72" y="553.3" font-size="8.3" font-weight="bold" fill="#f0f0f0" stroke="#f0f0f0" stroke-width="0.25" text-anchor="middle" textLength="34.2" lengthAdjust="spacingAndGlyphs">0.61MHz</text>
<line x1="912.13" y1="540.70" x2="912.13" y2="544.6" stroke="#e6e6e6" stroke-width="1"/>
<text x="912.13" y="553.3" font-size="8.3" font-weight="bold" fill="#f0f0f0" stroke="#f0f0f0" stroke-width="0.25" text-anchor="middle" textLength="34.2" lengthAdjust="spacingAndGlyphs">0.71MHz</text>
<line x1="981.53" y1="540.70" x2="981.53" y2="544.6" stroke="#e6e6e6" stroke-width="1"/>
<text x="981.53" y="553.3" font-size="8.3" font-weight="bold" fill="#f0f0f0" stroke="#f0f0f0" stroke-width="0.25" text-anchor="middle" textLength="34.2" lengthAdjust="spacingAndGlyphs">0.81MHz</text>
<line x1="1050.94" y1="540.70" x2="1050.94" y2="544.6" stroke="#e6e6e6" stroke-width="1"/>
<text x="1050.94" y="553.3" font-size="8.3" font-weight="bold" fill="#f0f0f0" stroke="#f0f0f0" stroke-width="0.25" text-anchor="middle" textLength="34.2" lengthAdjust="spacingAndGlyphs">0.91MHz</text>
<text x="769.6" y="25.2" font-size="8" font-weight="bold" fill="#e0e020" text-anchor="middle" textLength="17.2" lengthAdjust="spacingAndGlyphs">V(rx)</text>
<polyline points="426.30,484.39 427.50,478.90 429.05,473.81 430.77,469.86 432.66,466.83 434.89,464.35 436.26,463.22 437.64,462.30 440.73,460.76 444.68,459.46 447.60,458.79 451.04,458.17 459.62,457.10 503.77,453.49 516.83,452.25 529.37,450.91 550.84,448.19 571.28,445.04 582.96,442.96 594.30,440.72 605.29,438.32 615.94,435.76 626.07,433.08 635.87,430.23 645.31,427.23 654.42,424.06 661.29,421.47 667.82,418.82 674.17,416.07 680.18,413.27 686.02,410.36 691.69,407.34 697.19,404.19 702.51,400.91 707.67,397.51 712.48,394.09 717.12,390.54 721.58,386.87 725.88,383.06 730.00,379.11 733.95,375.02 737.56,370.99 741.34,366.40 744.94,361.63 748.38,356.66 751.47,351.76 754.56,346.39 757.31,341.15 759.89,335.74 762.46,329.78 764.87,323.59 766.97,317.58 768.99,311.15 770.88,304.43 772.63,297.47 774.26,290.12 775.75,282.50 777.10,274.65 779.36,258.73 781.27,240.96 782.83,221.21 784.08,199.02 784.98,175.98 785.71,148.28 786.92,65.20 788.14,148.50 788.83,175.23 789.73,198.75 790.95,220.85 792.44,240.37 794.28,258.26 796.50,274.73 797.82,282.81 799.28,290.68 800.84,298.17 802.54,305.43 804.38,312.46 806.36,319.26 808.50,325.90 810.73,332.17 813.14,338.31 815.71,344.32 818.46,350.18 821.38,355.88 824.47,361.44 827.57,366.58 831.00,371.87 834.61,377.02 838.73,382.47 843.20,387.93 847.84,393.19 852.65,398.26 857.80,403.33 863.12,408.21 868.79,413.08 874.80,417.91 880.99,422.58 887.52,427.21 894.39,431.80 901.43,436.24 908.82,440.64 916.37,444.90 924.45,449.22 932.69,453.40 941.45,457.62 950.39,461.71 959.83,465.83 969.45,469.83 979.42,473.78 989.72,477.69 1011.54,485.43 1034.73,492.98 1059.46,500.40 1085.74,507.68 1113.40,514.78" fill="none" stroke="#cccc3a" stroke-width="1.4" stroke-linejoin="round"/>
</g>
<rect x="0" y="559.1" width="1121" height="0.8" fill="#7a7a7a"/>
<rect x="0" y="559.9" width="1121" height="1.1" fill="#f4f4f4"/>
</svg></body></html>
